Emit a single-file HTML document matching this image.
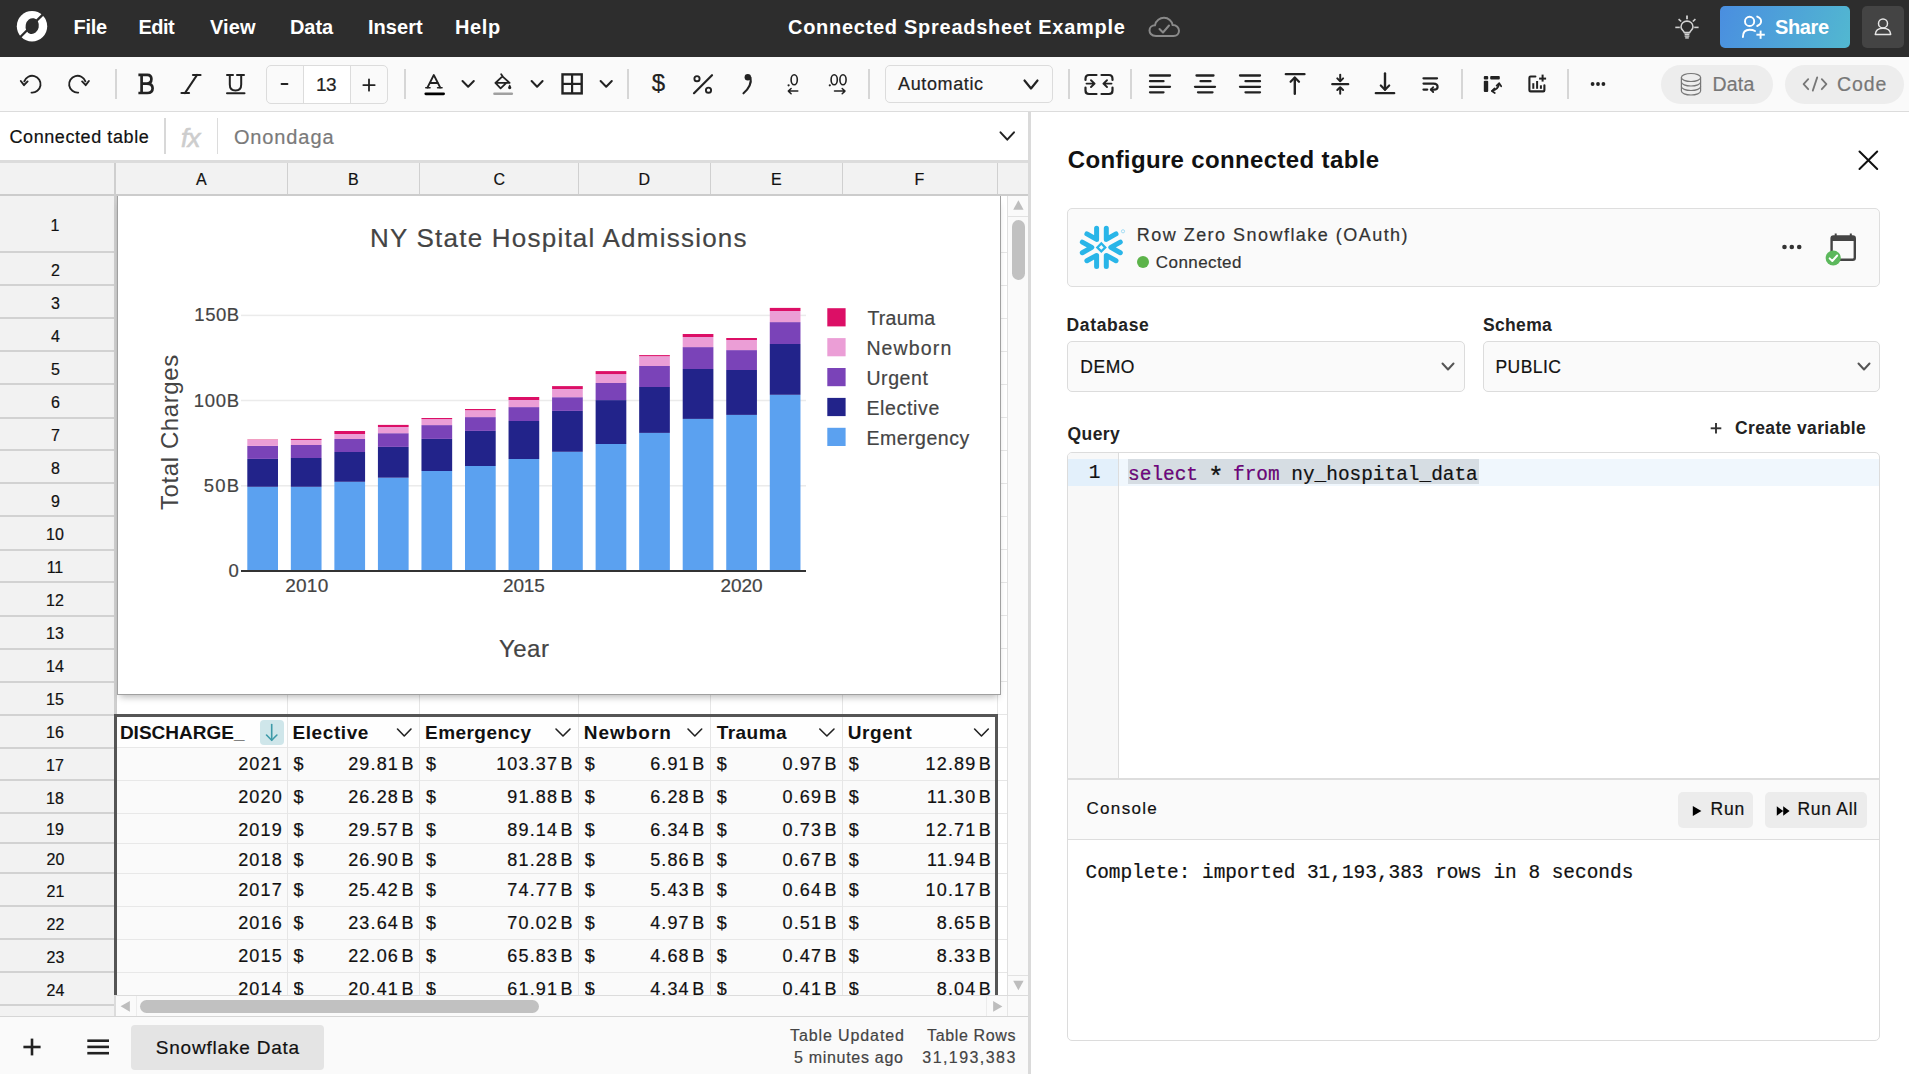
<!DOCTYPE html>
<html><head><meta charset="utf-8"><style>
html,body{margin:0;padding:0;}
body{width:1909px;height:1074px;position:relative;overflow:hidden;background:#fff;font-family:'Liberation Sans',sans-serif;}
svg{position:absolute;left:0;top:0;}
</style></head><body>
<div style="position:absolute;left:0px;top:0px;width:1909px;height:57px;background:#2d2d2d"></div><div style="position:absolute;left:1720px;top:6px;width:130px;height:42px;background:linear-gradient(110deg,#4a8ee0,#52b8d0);border-radius:5px"></div><div style="position:absolute;left:1862px;top:6px;width:42px;height:42px;background:#444;border-radius:5px"></div><div style="position:absolute;left:0px;top:57px;width:1031px;height:54px;background:#fafafa"></div><div style="position:absolute;left:1031px;top:57px;width:878px;height:54px;background:#fafafa"></div><div style="position:absolute;left:0px;top:111px;width:1909px;height:1px;background:#dcdcdc"></div><div style="position:absolute;left:266px;top:65px;width:122px;height:39px;background:#fafafa;border:1px solid #dcdcdc;border-radius:5px;box-sizing:border-box"></div><div style="position:absolute;left:303px;top:66px;width:48px;height:37px;background:#fff;border-left:1px solid #dcdcdc;border-right:1px solid #dcdcdc;box-sizing:border-box"></div><div style="position:absolute;left:885px;top:65px;width:168px;height:38px;background:#fafafa;border:1px solid #dcdcdc;border-radius:5px;box-sizing:border-box"></div><div style="position:absolute;left:1661px;top:65px;width:112px;height:39px;background:#ededed;border-radius:20px"></div><div style="position:absolute;left:1785px;top:65px;width:119px;height:39px;background:#ededed;border-radius:20px"></div><div style="position:absolute;left:115px;top:69px;width:1.5px;height:30px;background:#d6d6d6"></div><div style="position:absolute;left:404px;top:69px;width:1.5px;height:30px;background:#d6d6d6"></div><div style="position:absolute;left:627px;top:69px;width:1.5px;height:30px;background:#d6d6d6"></div><div style="position:absolute;left:868px;top:69px;width:1.5px;height:30px;background:#d6d6d6"></div><div style="position:absolute;left:1068px;top:69px;width:1.5px;height:30px;background:#d6d6d6"></div><div style="position:absolute;left:1130px;top:69px;width:1.5px;height:30px;background:#d6d6d6"></div><div style="position:absolute;left:1461px;top:69px;width:1.5px;height:30px;background:#d6d6d6"></div><div style="position:absolute;left:1567.3px;top:69px;width:1.5px;height:30px;background:#d6d6d6"></div><div style="position:absolute;left:0px;top:112px;width:1028px;height:48px;background:#fff"></div><div style="position:absolute;left:0px;top:160px;width:1028px;height:3px;background:#dcdcdc"></div><div style="position:absolute;left:164px;top:118px;width:2px;height:36px;background:#d8d8d8"></div><div style="position:absolute;left:217px;top:118px;width:1px;height:36px;background:#dcdcdc"></div><div style="position:absolute;left:0px;top:163px;width:1028px;height:31px;background:#f2f2f2"></div><div style="position:absolute;left:0px;top:194px;width:1028px;height:2px;background:#cccccc"></div><div style="position:absolute;left:116px;top:196px;width:892px;height:799px;background:#fff"></div><div style="position:absolute;left:0px;top:196px;width:114px;height:820px;background:#f2f2f2"></div><div style="position:absolute;left:114px;top:163px;width:2px;height:853px;background:#cfcfcf"></div><div style="position:absolute;left:116px;top:196px;width:1px;height:799px;background:#cdcdcd"></div><div style="position:absolute;left:287px;top:163px;width:1px;height:31px;background:#d0d0d0"></div><div style="position:absolute;left:419px;top:163px;width:1px;height:31px;background:#d0d0d0"></div><div style="position:absolute;left:578px;top:163px;width:1px;height:31px;background:#d0d0d0"></div><div style="position:absolute;left:710px;top:163px;width:1px;height:31px;background:#d0d0d0"></div><div style="position:absolute;left:842px;top:163px;width:1px;height:31px;background:#d0d0d0"></div><div style="position:absolute;left:997px;top:163px;width:1px;height:31px;background:#d0d0d0"></div><div style="position:absolute;left:0px;top:250.8px;width:114px;height:2.0px;background:#d2d2d2"></div><div style="position:absolute;left:117px;top:252px;width:891px;height:1px;background:#e6e6e6"></div><div style="position:absolute;left:0px;top:284.2px;width:114px;height:2.0px;background:#d2d2d2"></div><div style="position:absolute;left:117px;top:285px;width:891px;height:1px;background:#e6e6e6"></div><div style="position:absolute;left:0px;top:317.3px;width:114px;height:2.0px;background:#d2d2d2"></div><div style="position:absolute;left:117px;top:318px;width:891px;height:1px;background:#e6e6e6"></div><div style="position:absolute;left:0px;top:350.2px;width:114px;height:2.0px;background:#d2d2d2"></div><div style="position:absolute;left:117px;top:351px;width:891px;height:1px;background:#e6e6e6"></div><div style="position:absolute;left:0px;top:383.2px;width:114px;height:2.0px;background:#d2d2d2"></div><div style="position:absolute;left:117px;top:384px;width:891px;height:1px;background:#e6e6e6"></div><div style="position:absolute;left:0px;top:416.6px;width:114px;height:2.0px;background:#d2d2d2"></div><div style="position:absolute;left:117px;top:417px;width:891px;height:1px;background:#e6e6e6"></div><div style="position:absolute;left:0px;top:449.2px;width:114px;height:2.0px;background:#d2d2d2"></div><div style="position:absolute;left:117px;top:450px;width:891px;height:1px;background:#e6e6e6"></div><div style="position:absolute;left:0px;top:482.2px;width:114px;height:2.0px;background:#d2d2d2"></div><div style="position:absolute;left:117px;top:483px;width:891px;height:1px;background:#e6e6e6"></div><div style="position:absolute;left:0px;top:515.4px;width:114px;height:2.0px;background:#d2d2d2"></div><div style="position:absolute;left:117px;top:516px;width:891px;height:1px;background:#e6e6e6"></div><div style="position:absolute;left:0px;top:548.5px;width:114px;height:2.0px;background:#d2d2d2"></div><div style="position:absolute;left:117px;top:549px;width:891px;height:1px;background:#e6e6e6"></div><div style="position:absolute;left:0px;top:581.4px;width:114px;height:2.0px;background:#d2d2d2"></div><div style="position:absolute;left:117px;top:582px;width:891px;height:1px;background:#e6e6e6"></div><div style="position:absolute;left:0px;top:614.7px;width:114px;height:2.0px;background:#d2d2d2"></div><div style="position:absolute;left:117px;top:615px;width:891px;height:1px;background:#e6e6e6"></div><div style="position:absolute;left:0px;top:647.6px;width:114px;height:2.0px;background:#d2d2d2"></div><div style="position:absolute;left:117px;top:648px;width:891px;height:1px;background:#e6e6e6"></div><div style="position:absolute;left:0px;top:680.8px;width:114px;height:2.0px;background:#d2d2d2"></div><div style="position:absolute;left:117px;top:681px;width:891px;height:1px;background:#e6e6e6"></div><div style="position:absolute;left:0px;top:713.7px;width:114px;height:2.0px;background:#d2d2d2"></div><div style="position:absolute;left:117px;top:714px;width:891px;height:1px;background:#e6e6e6"></div><div style="position:absolute;left:0px;top:746.7px;width:114px;height:2.0px;background:#d2d2d2"></div><div style="position:absolute;left:117px;top:747px;width:891px;height:1px;background:#e6e6e6"></div><div style="position:absolute;left:0px;top:778.8px;width:114px;height:2.0px;background:#d2d2d2"></div><div style="position:absolute;left:117px;top:780px;width:891px;height:1px;background:#e6e6e6"></div><div style="position:absolute;left:0px;top:811.8px;width:114px;height:2.0px;background:#d2d2d2"></div><div style="position:absolute;left:117px;top:813px;width:891px;height:1px;background:#e6e6e6"></div><div style="position:absolute;left:0px;top:841.7px;width:114px;height:2.0px;background:#d2d2d2"></div><div style="position:absolute;left:117px;top:843px;width:891px;height:1px;background:#e6e6e6"></div><div style="position:absolute;left:0px;top:871.9px;width:114px;height:2.0px;background:#d2d2d2"></div><div style="position:absolute;left:117px;top:873px;width:891px;height:1px;background:#e6e6e6"></div><div style="position:absolute;left:0px;top:904.9px;width:114px;height:2.0px;background:#d2d2d2"></div><div style="position:absolute;left:117px;top:906px;width:891px;height:1px;background:#e6e6e6"></div><div style="position:absolute;left:0px;top:937.9px;width:114px;height:2.0px;background:#d2d2d2"></div><div style="position:absolute;left:117px;top:939px;width:891px;height:1px;background:#e6e6e6"></div><div style="position:absolute;left:0px;top:970.9px;width:114px;height:2.0px;background:#d2d2d2"></div><div style="position:absolute;left:117px;top:972px;width:891px;height:1px;background:#e6e6e6"></div><div style="position:absolute;left:0px;top:1003.9px;width:114px;height:2.0px;background:#d2d2d2"></div><div style="position:absolute;left:287px;top:196px;width:1px;height:799px;background:#e6e6e6"></div><div style="position:absolute;left:419px;top:196px;width:1px;height:799px;background:#e6e6e6"></div><div style="position:absolute;left:578px;top:196px;width:1px;height:799px;background:#e6e6e6"></div><div style="position:absolute;left:710px;top:196px;width:1px;height:799px;background:#e6e6e6"></div><div style="position:absolute;left:842px;top:196px;width:1px;height:799px;background:#e6e6e6"></div><div style="position:absolute;left:997px;top:196px;width:1px;height:799px;background:#e6e6e6"></div><div style="position:absolute;left:1007px;top:196px;width:1px;height:799px;background:#e0e0e0"></div><div style="position:absolute;left:114px;top:714px;width:884px;height:281px;background:#fafafa;border:3px solid #555;border-bottom:none;box-sizing:border-box"></div><div style="position:absolute;left:117px;top:717px;width:878px;height:30px;background:#fefefe"></div><div style="position:absolute;left:117px;top:747px;width:878px;height:1px;background:#e8e8e8"></div><div style="position:absolute;left:117px;top:780px;width:878px;height:1px;background:#e8e8e8"></div><div style="position:absolute;left:117px;top:813px;width:878px;height:1px;background:#e8e8e8"></div><div style="position:absolute;left:117px;top:843px;width:878px;height:1px;background:#e8e8e8"></div><div style="position:absolute;left:117px;top:873px;width:878px;height:1px;background:#e8e8e8"></div><div style="position:absolute;left:117px;top:906px;width:878px;height:1px;background:#e8e8e8"></div><div style="position:absolute;left:117px;top:939px;width:878px;height:1px;background:#e8e8e8"></div><div style="position:absolute;left:117px;top:972px;width:878px;height:1px;background:#e8e8e8"></div><div style="position:absolute;left:287px;top:717px;width:1px;height:278px;background:#e6e6e6"></div><div style="position:absolute;left:419px;top:717px;width:1px;height:278px;background:#e6e6e6"></div><div style="position:absolute;left:578px;top:717px;width:1px;height:278px;background:#e6e6e6"></div><div style="position:absolute;left:710px;top:717px;width:1px;height:278px;background:#e6e6e6"></div><div style="position:absolute;left:842px;top:717px;width:1px;height:278px;background:#e6e6e6"></div><div style="position:absolute;left:260px;top:720px;width:24px;height:24.5px;background:#cfe6ea;border-radius:4px"></div><div style="position:absolute;left:1008px;top:196px;width:20px;height:799px;background:#fafafa"></div><div style="position:absolute;left:1008px;top:216px;width:20px;height:1px;background:#e2e2e2"></div><div style="position:absolute;left:1011.5px;top:220px;width:13.5px;height:60px;background:#c1c1c1;border-radius:7px"></div><div style="position:absolute;left:1008px;top:975px;width:20px;height:1px;background:#e2e2e2"></div><div style="position:absolute;left:116px;top:995px;width:891px;height:21px;background:#fafafa"></div><div style="position:absolute;left:116px;top:995px;width:912px;height:1px;background:#dcdcdc"></div><div style="position:absolute;left:136px;top:996px;width:1px;height:20px;background:#ececec"></div><div style="position:absolute;left:140px;top:999.5px;width:399px;height:13.5px;background:#c1c1c1;border-radius:7px"></div><div style="position:absolute;left:986px;top:996px;width:1px;height:20px;background:#ececec"></div><div style="position:absolute;left:1007px;top:996px;width:1px;height:20px;background:#e6e6e6"></div><div style="position:absolute;left:1008px;top:996px;width:20px;height:20px;background:#fafafa"></div><div style="position:absolute;left:114px;top:995px;width:2px;height:21px;background:#dcdcdc"></div><div style="position:absolute;left:0px;top:1016px;width:1028px;height:58px;background:#fafafa"></div><div style="position:absolute;left:0px;top:1016px;width:1028px;height:1px;background:#d6d6d6"></div><div style="position:absolute;left:131px;top:1025px;width:193px;height:45px;background:#e4e4e4;border-radius:4px"></div><div style="position:absolute;left:1028px;top:112px;width:3px;height:962px;background:#dadada"></div><div style="position:absolute;left:1031px;top:112px;width:878px;height:962px;background:#fff"></div><div style="position:absolute;left:1067px;top:208px;width:813px;height:79px;background:#fafafa;border:1px solid #dedede;border-radius:5px;box-sizing:border-box"></div><div style="position:absolute;left:1137px;top:256px;width:12px;height:12px;background:#5cb34a;border-radius:6px"></div><div style="position:absolute;left:1067px;top:341px;width:398px;height:51px;background:#fafafa;border:1px solid #dcdcdc;border-radius:5px;box-sizing:border-box"></div><div style="position:absolute;left:1483px;top:341px;width:397px;height:51px;background:#fafafa;border:1px solid #dcdcdc;border-radius:5px;box-sizing:border-box"></div><div style="position:absolute;left:1067px;top:452px;width:813px;height:589px;background:#fff;border:1px solid #dcdcdc;border-radius:5px;box-sizing:border-box"></div><div style="position:absolute;left:1068px;top:453px;width:50px;height:326px;background:#f8f8f8;border-top-left-radius:4px"></div><div style="position:absolute;left:1118px;top:453px;width:1px;height:326px;background:#dddddd"></div><div style="position:absolute;left:1068px;top:459px;width:50px;height:27px;background:#e3f0fb"></div><div style="position:absolute;left:1119px;top:459px;width:760px;height:27px;background:#f0f7fd"></div><div style="position:absolute;left:1128px;top:459px;width:351px;height:25px;background:#d6dde3"></div><div style="position:absolute;left:1068px;top:779px;width:811px;height:60px;background:#fafafa"></div><div style="position:absolute;left:1068px;top:778px;width:811px;height:2px;background:#dddddd"></div><div style="position:absolute;left:1068px;top:839px;width:811px;height:1px;background:#dddddd"></div><div style="position:absolute;left:1678px;top:792px;width:75px;height:35.5px;background:#ececec;border-radius:5px"></div><div style="position:absolute;left:1765px;top:792px;width:102px;height:35.5px;background:#ececec;border-radius:5px"></div><div style="position:absolute;left:117px;top:196px;width:882px;height:498px;background:#fff;border:1px solid #a0a0a0;border-top:none;box-shadow:0 5px 7px -3px rgba(0,0,0,0.28)"></div>
<div style="position:absolute;left:73.50px;top:16.77px;font-family:'Liberation Sans';font-size:20px;line-height:20px;font-weight:700;font-style:normal;color:#fff;letter-spacing:-0.277px;white-space:pre;">File</div><div style="position:absolute;left:138.50px;top:16.77px;font-family:'Liberation Sans';font-size:20px;line-height:20px;font-weight:700;font-style:normal;color:#fff;letter-spacing:-0.538px;white-space:pre;">Edit</div><div style="position:absolute;left:210.00px;top:16.77px;font-family:'Liberation Sans';font-size:20px;line-height:20px;font-weight:700;font-style:normal;color:#fff;letter-spacing:0.114px;white-space:pre;">View</div><div style="position:absolute;left:290.00px;top:16.77px;font-family:'Liberation Sans';font-size:20px;line-height:20px;font-weight:700;font-style:normal;color:#fff;letter-spacing:-0.076px;white-space:pre;">Data</div><div style="position:absolute;left:368.00px;top:16.77px;font-family:'Liberation Sans';font-size:20px;line-height:20px;font-weight:700;font-style:normal;color:#fff;letter-spacing:0.039px;white-space:pre;">Insert</div><div style="position:absolute;left:455.00px;top:16.77px;font-family:'Liberation Sans';font-size:20px;line-height:20px;font-weight:700;font-style:normal;color:#fff;letter-spacing:0.626px;white-space:pre;">Help</div><div style="position:absolute;left:788.00px;top:17.27px;font-family:'Liberation Sans';font-size:20px;line-height:20px;font-weight:700;font-style:normal;color:#fff;letter-spacing:0.716px;white-space:pre;">Connected Spreadsheet Example</div><div style="position:absolute;left:1775.00px;top:17.07px;font-family:'Liberation Sans';font-size:20px;line-height:20px;font-weight:700;font-style:normal;color:#fff;letter-spacing:-0.366px;white-space:pre;">Share</div><div style="position:absolute;left:316.00px;top:74.52px;font-family:'Liberation Sans';font-size:19px;line-height:19px;font-weight:400;font-style:normal;color:#222;letter-spacing:-0.567px;white-space:pre;-webkit-text-stroke:0.2px #222;">13</div><div style="position:absolute;left:898.00px;top:74.76px;font-family:'Liberation Sans';font-size:18px;line-height:18px;font-weight:400;font-style:normal;color:#222;letter-spacing:0.621px;white-space:pre;-webkit-text-stroke:0.2px #222;">Automatic</div><div style="position:absolute;left:1712.50px;top:75.39px;font-family:'Liberation Sans';font-size:19.5px;line-height:19.5px;font-weight:400;font-style:normal;color:#777;letter-spacing:0.218px;white-space:pre;-webkit-text-stroke:0.2px #777;">Data</div><div style="position:absolute;left:1837.00px;top:75.39px;font-family:'Liberation Sans';font-size:19.5px;line-height:19.5px;font-weight:400;font-style:normal;color:#777;letter-spacing:0.876px;white-space:pre;-webkit-text-stroke:0.2px #777;">Code</div><div style="position:absolute;left:9.50px;top:127.76px;font-family:'Liberation Sans';font-size:18px;line-height:18px;font-weight:400;font-style:normal;color:#111;letter-spacing:0.580px;white-space:pre;-webkit-text-stroke:0.2px #111;">Connected table</div><div style="position:absolute;left:181.00px;top:124.99px;font-family:'Liberation Sans';font-size:26px;line-height:26px;font-weight:400;font-style:italic;color:#cdcdcd;letter-spacing:-0.600px;white-space:pre;-webkit-text-stroke:0.6px #cdcdcd;">fx</div><div style="position:absolute;left:233.90px;top:126.87px;font-family:'Liberation Sans';font-size:20px;line-height:20px;font-weight:400;font-style:normal;color:#7a7a7a;letter-spacing:0.886px;white-space:pre;-webkit-text-stroke:0.2px #7a7a7a;">Onondaga</div><div style="position:absolute;left:196.00px;top:172.46px;font-family:'Liberation Sans';font-size:16px;line-height:16px;font-weight:400;font-style:normal;color:#111;letter-spacing:0.000px;white-space:pre;-webkit-text-stroke:0.2px #111;">A</div><div style="position:absolute;left:348.00px;top:172.46px;font-family:'Liberation Sans';font-size:16px;line-height:16px;font-weight:400;font-style:normal;color:#111;letter-spacing:0.000px;white-space:pre;-webkit-text-stroke:0.2px #111;">B</div><div style="position:absolute;left:493.50px;top:172.46px;font-family:'Liberation Sans';font-size:16px;line-height:16px;font-weight:400;font-style:normal;color:#111;letter-spacing:0.000px;white-space:pre;-webkit-text-stroke:0.2px #111;">C</div><div style="position:absolute;left:638.50px;top:172.46px;font-family:'Liberation Sans';font-size:16px;line-height:16px;font-weight:400;font-style:normal;color:#111;letter-spacing:0.000px;white-space:pre;-webkit-text-stroke:0.2px #111;">D</div><div style="position:absolute;left:771.00px;top:172.46px;font-family:'Liberation Sans';font-size:16px;line-height:16px;font-weight:400;font-style:normal;color:#111;letter-spacing:0.000px;white-space:pre;-webkit-text-stroke:0.2px #111;">E</div><div style="position:absolute;left:914.50px;top:172.46px;font-family:'Liberation Sans';font-size:16px;line-height:16px;font-weight:400;font-style:normal;color:#111;letter-spacing:0.000px;white-space:pre;-webkit-text-stroke:0.2px #111;">F</div><div style="position:absolute;left:50.50px;top:218.46px;font-family:'Liberation Sans';font-size:16px;line-height:16px;font-weight:400;font-style:normal;color:#111;letter-spacing:0.000px;white-space:pre;-webkit-text-stroke:0.2px #111;">1</div><div style="position:absolute;left:51.00px;top:262.96px;font-family:'Liberation Sans';font-size:16px;line-height:16px;font-weight:400;font-style:normal;color:#111;letter-spacing:0.000px;white-space:pre;-webkit-text-stroke:0.2px #111;">2</div><div style="position:absolute;left:51.00px;top:295.96px;font-family:'Liberation Sans';font-size:16px;line-height:16px;font-weight:400;font-style:normal;color:#111;letter-spacing:0.000px;white-space:pre;-webkit-text-stroke:0.2px #111;">3</div><div style="position:absolute;left:51.00px;top:328.96px;font-family:'Liberation Sans';font-size:16px;line-height:16px;font-weight:400;font-style:normal;color:#111;letter-spacing:0.000px;white-space:pre;-webkit-text-stroke:0.2px #111;">4</div><div style="position:absolute;left:51.00px;top:361.96px;font-family:'Liberation Sans';font-size:16px;line-height:16px;font-weight:400;font-style:normal;color:#111;letter-spacing:0.000px;white-space:pre;-webkit-text-stroke:0.2px #111;">5</div><div style="position:absolute;left:51.00px;top:394.96px;font-family:'Liberation Sans';font-size:16px;line-height:16px;font-weight:400;font-style:normal;color:#111;letter-spacing:0.000px;white-space:pre;-webkit-text-stroke:0.2px #111;">6</div><div style="position:absolute;left:51.00px;top:427.96px;font-family:'Liberation Sans';font-size:16px;line-height:16px;font-weight:400;font-style:normal;color:#111;letter-spacing:0.000px;white-space:pre;-webkit-text-stroke:0.2px #111;">7</div><div style="position:absolute;left:51.00px;top:460.96px;font-family:'Liberation Sans';font-size:16px;line-height:16px;font-weight:400;font-style:normal;color:#111;letter-spacing:0.000px;white-space:pre;-webkit-text-stroke:0.2px #111;">8</div><div style="position:absolute;left:51.00px;top:493.96px;font-family:'Liberation Sans';font-size:16px;line-height:16px;font-weight:400;font-style:normal;color:#111;letter-spacing:0.000px;white-space:pre;-webkit-text-stroke:0.2px #111;">9</div><div style="position:absolute;left:46.05px;top:526.96px;font-family:'Liberation Sans';font-size:16px;line-height:16px;font-weight:400;font-style:normal;color:#111;letter-spacing:0.000px;white-space:pre;-webkit-text-stroke:0.2px #111;">10</div><div style="position:absolute;left:46.64px;top:559.96px;font-family:'Liberation Sans';font-size:16px;line-height:16px;font-weight:400;font-style:normal;color:#111;letter-spacing:0.000px;white-space:pre;-webkit-text-stroke:0.2px #111;">11</div><div style="position:absolute;left:46.05px;top:592.96px;font-family:'Liberation Sans';font-size:16px;line-height:16px;font-weight:400;font-style:normal;color:#111;letter-spacing:0.000px;white-space:pre;-webkit-text-stroke:0.2px #111;">12</div><div style="position:absolute;left:46.05px;top:625.96px;font-family:'Liberation Sans';font-size:16px;line-height:16px;font-weight:400;font-style:normal;color:#111;letter-spacing:0.000px;white-space:pre;-webkit-text-stroke:0.2px #111;">13</div><div style="position:absolute;left:46.05px;top:658.96px;font-family:'Liberation Sans';font-size:16px;line-height:16px;font-weight:400;font-style:normal;color:#111;letter-spacing:0.000px;white-space:pre;-webkit-text-stroke:0.2px #111;">14</div><div style="position:absolute;left:46.05px;top:691.96px;font-family:'Liberation Sans';font-size:16px;line-height:16px;font-weight:400;font-style:normal;color:#111;letter-spacing:0.000px;white-space:pre;-webkit-text-stroke:0.2px #111;">15</div><div style="position:absolute;left:46.05px;top:724.96px;font-family:'Liberation Sans';font-size:16px;line-height:16px;font-weight:400;font-style:normal;color:#111;letter-spacing:0.000px;white-space:pre;-webkit-text-stroke:0.2px #111;">16</div><div style="position:absolute;left:46.05px;top:757.96px;font-family:'Liberation Sans';font-size:16px;line-height:16px;font-weight:400;font-style:normal;color:#111;letter-spacing:0.000px;white-space:pre;-webkit-text-stroke:0.2px #111;">17</div><div style="position:absolute;left:46.05px;top:790.96px;font-family:'Liberation Sans';font-size:16px;line-height:16px;font-weight:400;font-style:normal;color:#111;letter-spacing:0.000px;white-space:pre;-webkit-text-stroke:0.2px #111;">18</div><div style="position:absolute;left:46.05px;top:822.46px;font-family:'Liberation Sans';font-size:16px;line-height:16px;font-weight:400;font-style:normal;color:#111;letter-spacing:0.000px;white-space:pre;-webkit-text-stroke:0.2px #111;">19</div><div style="position:absolute;left:46.55px;top:852.46px;font-family:'Liberation Sans';font-size:16px;line-height:16px;font-weight:400;font-style:normal;color:#111;letter-spacing:0.000px;white-space:pre;-webkit-text-stroke:0.2px #111;">20</div><div style="position:absolute;left:46.55px;top:883.96px;font-family:'Liberation Sans';font-size:16px;line-height:16px;font-weight:400;font-style:normal;color:#111;letter-spacing:0.000px;white-space:pre;-webkit-text-stroke:0.2px #111;">21</div><div style="position:absolute;left:46.55px;top:916.96px;font-family:'Liberation Sans';font-size:16px;line-height:16px;font-weight:400;font-style:normal;color:#111;letter-spacing:0.000px;white-space:pre;-webkit-text-stroke:0.2px #111;">22</div><div style="position:absolute;left:46.55px;top:949.96px;font-family:'Liberation Sans';font-size:16px;line-height:16px;font-weight:400;font-style:normal;color:#111;letter-spacing:0.000px;white-space:pre;-webkit-text-stroke:0.2px #111;">23</div><div style="position:absolute;left:46.55px;top:982.96px;font-family:'Liberation Sans';font-size:16px;line-height:16px;font-weight:400;font-style:normal;color:#111;letter-spacing:0.000px;white-space:pre;-webkit-text-stroke:0.2px #111;">24</div><div style="position:absolute;left:119.90px;top:722.72px;font-family:'Liberation Sans';font-size:19px;line-height:19px;font-weight:700;font-style:normal;color:#111;letter-spacing:0.010px;white-space:pre;">DISCHARGE_</div><div style="position:absolute;left:292.50px;top:722.72px;font-family:'Liberation Sans';font-size:19px;line-height:19px;font-weight:700;font-style:normal;color:#111;letter-spacing:0.577px;white-space:pre;">Elective</div><div style="position:absolute;left:425.00px;top:722.72px;font-family:'Liberation Sans';font-size:19px;line-height:19px;font-weight:700;font-style:normal;color:#111;letter-spacing:0.453px;white-space:pre;">Emergency</div><div style="position:absolute;left:583.80px;top:722.72px;font-family:'Liberation Sans';font-size:19px;line-height:19px;font-weight:700;font-style:normal;color:#111;letter-spacing:0.971px;white-space:pre;">Newborn</div><div style="position:absolute;left:716.80px;top:722.72px;font-family:'Liberation Sans';font-size:19px;line-height:19px;font-weight:700;font-style:normal;color:#111;letter-spacing:0.436px;white-space:pre;">Trauma</div><div style="position:absolute;left:847.80px;top:722.72px;font-family:'Liberation Sans';font-size:19px;line-height:19px;font-weight:700;font-style:normal;color:#111;letter-spacing:0.561px;white-space:pre;">Urgent</div><div style="position:absolute;left:238.17px;top:755.16px;font-family:'Liberation Sans';font-size:18px;line-height:18px;font-weight:400;font-style:normal;color:#111;letter-spacing:1.200px;white-space:pre;-webkit-text-stroke:0.2px #111;">2021</div><div style="position:absolute;left:293.50px;top:755.16px;font-family:'Liberation Sans';font-size:18px;line-height:18px;font-weight:400;font-style:normal;color:#111;letter-spacing:0.000px;white-space:pre;-webkit-text-stroke:0.2px #111;">$</div><div style="position:absolute;left:401.40px;top:755.16px;font-family:'Liberation Sans';font-size:18px;line-height:18px;font-weight:400;font-style:normal;color:#111;letter-spacing:0.000px;white-space:pre;-webkit-text-stroke:0.2px #111;">B</div><div style="position:absolute;left:348.17px;top:755.16px;font-family:'Liberation Sans';font-size:18px;line-height:18px;font-weight:400;font-style:normal;color:#111;letter-spacing:1.150px;white-space:pre;-webkit-text-stroke:0.2px #111;">29.81</div><div style="position:absolute;left:426.00px;top:755.16px;font-family:'Liberation Sans';font-size:18px;line-height:18px;font-weight:400;font-style:normal;color:#111;letter-spacing:0.000px;white-space:pre;-webkit-text-stroke:0.2px #111;">$</div><div style="position:absolute;left:560.60px;top:755.16px;font-family:'Liberation Sans';font-size:18px;line-height:18px;font-weight:400;font-style:normal;color:#111;letter-spacing:0.000px;white-space:pre;-webkit-text-stroke:0.2px #111;">B</div><div style="position:absolute;left:496.21px;top:755.16px;font-family:'Liberation Sans';font-size:18px;line-height:18px;font-weight:400;font-style:normal;color:#111;letter-spacing:1.150px;white-space:pre;-webkit-text-stroke:0.2px #111;">103.37</div><div style="position:absolute;left:584.80px;top:755.16px;font-family:'Liberation Sans';font-size:18px;line-height:18px;font-weight:400;font-style:normal;color:#111;letter-spacing:0.000px;white-space:pre;-webkit-text-stroke:0.2px #111;">$</div><div style="position:absolute;left:692.20px;top:755.16px;font-family:'Liberation Sans';font-size:18px;line-height:18px;font-weight:400;font-style:normal;color:#111;letter-spacing:0.000px;white-space:pre;-webkit-text-stroke:0.2px #111;">B</div><div style="position:absolute;left:650.13px;top:755.16px;font-family:'Liberation Sans';font-size:18px;line-height:18px;font-weight:400;font-style:normal;color:#111;letter-spacing:1.150px;white-space:pre;-webkit-text-stroke:0.2px #111;">6.91</div><div style="position:absolute;left:716.80px;top:755.16px;font-family:'Liberation Sans';font-size:18px;line-height:18px;font-weight:400;font-style:normal;color:#111;letter-spacing:0.000px;white-space:pre;-webkit-text-stroke:0.2px #111;">$</div><div style="position:absolute;left:824.60px;top:755.16px;font-family:'Liberation Sans';font-size:18px;line-height:18px;font-weight:400;font-style:normal;color:#111;letter-spacing:0.000px;white-space:pre;-webkit-text-stroke:0.2px #111;">B</div><div style="position:absolute;left:782.53px;top:755.16px;font-family:'Liberation Sans';font-size:18px;line-height:18px;font-weight:400;font-style:normal;color:#111;letter-spacing:1.150px;white-space:pre;-webkit-text-stroke:0.2px #111;">0.97</div><div style="position:absolute;left:848.80px;top:755.16px;font-family:'Liberation Sans';font-size:18px;line-height:18px;font-weight:400;font-style:normal;color:#111;letter-spacing:0.000px;white-space:pre;-webkit-text-stroke:0.2px #111;">$</div><div style="position:absolute;left:978.80px;top:755.16px;font-family:'Liberation Sans';font-size:18px;line-height:18px;font-weight:400;font-style:normal;color:#111;letter-spacing:0.000px;white-space:pre;-webkit-text-stroke:0.2px #111;">B</div><div style="position:absolute;left:925.57px;top:755.16px;font-family:'Liberation Sans';font-size:18px;line-height:18px;font-weight:400;font-style:normal;color:#111;letter-spacing:1.150px;white-space:pre;-webkit-text-stroke:0.2px #111;">12.89</div><div style="position:absolute;left:238.17px;top:788.16px;font-family:'Liberation Sans';font-size:18px;line-height:18px;font-weight:400;font-style:normal;color:#111;letter-spacing:1.200px;white-space:pre;-webkit-text-stroke:0.2px #111;">2020</div><div style="position:absolute;left:293.50px;top:788.16px;font-family:'Liberation Sans';font-size:18px;line-height:18px;font-weight:400;font-style:normal;color:#111;letter-spacing:0.000px;white-space:pre;-webkit-text-stroke:0.2px #111;">$</div><div style="position:absolute;left:401.40px;top:788.16px;font-family:'Liberation Sans';font-size:18px;line-height:18px;font-weight:400;font-style:normal;color:#111;letter-spacing:0.000px;white-space:pre;-webkit-text-stroke:0.2px #111;">B</div><div style="position:absolute;left:348.17px;top:788.16px;font-family:'Liberation Sans';font-size:18px;line-height:18px;font-weight:400;font-style:normal;color:#111;letter-spacing:1.150px;white-space:pre;-webkit-text-stroke:0.2px #111;">26.28</div><div style="position:absolute;left:426.00px;top:788.16px;font-family:'Liberation Sans';font-size:18px;line-height:18px;font-weight:400;font-style:normal;color:#111;letter-spacing:0.000px;white-space:pre;-webkit-text-stroke:0.2px #111;">$</div><div style="position:absolute;left:560.60px;top:788.16px;font-family:'Liberation Sans';font-size:18px;line-height:18px;font-weight:400;font-style:normal;color:#111;letter-spacing:0.000px;white-space:pre;-webkit-text-stroke:0.2px #111;">B</div><div style="position:absolute;left:507.37px;top:788.16px;font-family:'Liberation Sans';font-size:18px;line-height:18px;font-weight:400;font-style:normal;color:#111;letter-spacing:1.150px;white-space:pre;-webkit-text-stroke:0.2px #111;">91.88</div><div style="position:absolute;left:584.80px;top:788.16px;font-family:'Liberation Sans';font-size:18px;line-height:18px;font-weight:400;font-style:normal;color:#111;letter-spacing:0.000px;white-space:pre;-webkit-text-stroke:0.2px #111;">$</div><div style="position:absolute;left:692.20px;top:788.16px;font-family:'Liberation Sans';font-size:18px;line-height:18px;font-weight:400;font-style:normal;color:#111;letter-spacing:0.000px;white-space:pre;-webkit-text-stroke:0.2px #111;">B</div><div style="position:absolute;left:650.13px;top:788.16px;font-family:'Liberation Sans';font-size:18px;line-height:18px;font-weight:400;font-style:normal;color:#111;letter-spacing:1.150px;white-space:pre;-webkit-text-stroke:0.2px #111;">6.28</div><div style="position:absolute;left:716.80px;top:788.16px;font-family:'Liberation Sans';font-size:18px;line-height:18px;font-weight:400;font-style:normal;color:#111;letter-spacing:0.000px;white-space:pre;-webkit-text-stroke:0.2px #111;">$</div><div style="position:absolute;left:824.60px;top:788.16px;font-family:'Liberation Sans';font-size:18px;line-height:18px;font-weight:400;font-style:normal;color:#111;letter-spacing:0.000px;white-space:pre;-webkit-text-stroke:0.2px #111;">B</div><div style="position:absolute;left:782.53px;top:788.16px;font-family:'Liberation Sans';font-size:18px;line-height:18px;font-weight:400;font-style:normal;color:#111;letter-spacing:1.150px;white-space:pre;-webkit-text-stroke:0.2px #111;">0.69</div><div style="position:absolute;left:848.80px;top:788.16px;font-family:'Liberation Sans';font-size:18px;line-height:18px;font-weight:400;font-style:normal;color:#111;letter-spacing:0.000px;white-space:pre;-webkit-text-stroke:0.2px #111;">$</div><div style="position:absolute;left:978.80px;top:788.16px;font-family:'Liberation Sans';font-size:18px;line-height:18px;font-weight:400;font-style:normal;color:#111;letter-spacing:0.000px;white-space:pre;-webkit-text-stroke:0.2px #111;">B</div><div style="position:absolute;left:926.90px;top:788.16px;font-family:'Liberation Sans';font-size:18px;line-height:18px;font-weight:400;font-style:normal;color:#111;letter-spacing:1.150px;white-space:pre;-webkit-text-stroke:0.2px #111;">11.30</div><div style="position:absolute;left:238.17px;top:821.16px;font-family:'Liberation Sans';font-size:18px;line-height:18px;font-weight:400;font-style:normal;color:#111;letter-spacing:1.200px;white-space:pre;-webkit-text-stroke:0.2px #111;">2019</div><div style="position:absolute;left:293.50px;top:821.16px;font-family:'Liberation Sans';font-size:18px;line-height:18px;font-weight:400;font-style:normal;color:#111;letter-spacing:0.000px;white-space:pre;-webkit-text-stroke:0.2px #111;">$</div><div style="position:absolute;left:401.40px;top:821.16px;font-family:'Liberation Sans';font-size:18px;line-height:18px;font-weight:400;font-style:normal;color:#111;letter-spacing:0.000px;white-space:pre;-webkit-text-stroke:0.2px #111;">B</div><div style="position:absolute;left:348.17px;top:821.16px;font-family:'Liberation Sans';font-size:18px;line-height:18px;font-weight:400;font-style:normal;color:#111;letter-spacing:1.150px;white-space:pre;-webkit-text-stroke:0.2px #111;">29.57</div><div style="position:absolute;left:426.00px;top:821.16px;font-family:'Liberation Sans';font-size:18px;line-height:18px;font-weight:400;font-style:normal;color:#111;letter-spacing:0.000px;white-space:pre;-webkit-text-stroke:0.2px #111;">$</div><div style="position:absolute;left:560.60px;top:821.16px;font-family:'Liberation Sans';font-size:18px;line-height:18px;font-weight:400;font-style:normal;color:#111;letter-spacing:0.000px;white-space:pre;-webkit-text-stroke:0.2px #111;">B</div><div style="position:absolute;left:507.37px;top:821.16px;font-family:'Liberation Sans';font-size:18px;line-height:18px;font-weight:400;font-style:normal;color:#111;letter-spacing:1.150px;white-space:pre;-webkit-text-stroke:0.2px #111;">89.14</div><div style="position:absolute;left:584.80px;top:821.16px;font-family:'Liberation Sans';font-size:18px;line-height:18px;font-weight:400;font-style:normal;color:#111;letter-spacing:0.000px;white-space:pre;-webkit-text-stroke:0.2px #111;">$</div><div style="position:absolute;left:692.20px;top:821.16px;font-family:'Liberation Sans';font-size:18px;line-height:18px;font-weight:400;font-style:normal;color:#111;letter-spacing:0.000px;white-space:pre;-webkit-text-stroke:0.2px #111;">B</div><div style="position:absolute;left:650.13px;top:821.16px;font-family:'Liberation Sans';font-size:18px;line-height:18px;font-weight:400;font-style:normal;color:#111;letter-spacing:1.150px;white-space:pre;-webkit-text-stroke:0.2px #111;">6.34</div><div style="position:absolute;left:716.80px;top:821.16px;font-family:'Liberation Sans';font-size:18px;line-height:18px;font-weight:400;font-style:normal;color:#111;letter-spacing:0.000px;white-space:pre;-webkit-text-stroke:0.2px #111;">$</div><div style="position:absolute;left:824.60px;top:821.16px;font-family:'Liberation Sans';font-size:18px;line-height:18px;font-weight:400;font-style:normal;color:#111;letter-spacing:0.000px;white-space:pre;-webkit-text-stroke:0.2px #111;">B</div><div style="position:absolute;left:782.53px;top:821.16px;font-family:'Liberation Sans';font-size:18px;line-height:18px;font-weight:400;font-style:normal;color:#111;letter-spacing:1.150px;white-space:pre;-webkit-text-stroke:0.2px #111;">0.73</div><div style="position:absolute;left:848.80px;top:821.16px;font-family:'Liberation Sans';font-size:18px;line-height:18px;font-weight:400;font-style:normal;color:#111;letter-spacing:0.000px;white-space:pre;-webkit-text-stroke:0.2px #111;">$</div><div style="position:absolute;left:978.80px;top:821.16px;font-family:'Liberation Sans';font-size:18px;line-height:18px;font-weight:400;font-style:normal;color:#111;letter-spacing:0.000px;white-space:pre;-webkit-text-stroke:0.2px #111;">B</div><div style="position:absolute;left:925.57px;top:821.16px;font-family:'Liberation Sans';font-size:18px;line-height:18px;font-weight:400;font-style:normal;color:#111;letter-spacing:1.150px;white-space:pre;-webkit-text-stroke:0.2px #111;">12.71</div><div style="position:absolute;left:238.17px;top:851.16px;font-family:'Liberation Sans';font-size:18px;line-height:18px;font-weight:400;font-style:normal;color:#111;letter-spacing:1.200px;white-space:pre;-webkit-text-stroke:0.2px #111;">2018</div><div style="position:absolute;left:293.50px;top:851.16px;font-family:'Liberation Sans';font-size:18px;line-height:18px;font-weight:400;font-style:normal;color:#111;letter-spacing:0.000px;white-space:pre;-webkit-text-stroke:0.2px #111;">$</div><div style="position:absolute;left:401.40px;top:851.16px;font-family:'Liberation Sans';font-size:18px;line-height:18px;font-weight:400;font-style:normal;color:#111;letter-spacing:0.000px;white-space:pre;-webkit-text-stroke:0.2px #111;">B</div><div style="position:absolute;left:348.17px;top:851.16px;font-family:'Liberation Sans';font-size:18px;line-height:18px;font-weight:400;font-style:normal;color:#111;letter-spacing:1.150px;white-space:pre;-webkit-text-stroke:0.2px #111;">26.90</div><div style="position:absolute;left:426.00px;top:851.16px;font-family:'Liberation Sans';font-size:18px;line-height:18px;font-weight:400;font-style:normal;color:#111;letter-spacing:0.000px;white-space:pre;-webkit-text-stroke:0.2px #111;">$</div><div style="position:absolute;left:560.60px;top:851.16px;font-family:'Liberation Sans';font-size:18px;line-height:18px;font-weight:400;font-style:normal;color:#111;letter-spacing:0.000px;white-space:pre;-webkit-text-stroke:0.2px #111;">B</div><div style="position:absolute;left:507.37px;top:851.16px;font-family:'Liberation Sans';font-size:18px;line-height:18px;font-weight:400;font-style:normal;color:#111;letter-spacing:1.150px;white-space:pre;-webkit-text-stroke:0.2px #111;">81.28</div><div style="position:absolute;left:584.80px;top:851.16px;font-family:'Liberation Sans';font-size:18px;line-height:18px;font-weight:400;font-style:normal;color:#111;letter-spacing:0.000px;white-space:pre;-webkit-text-stroke:0.2px #111;">$</div><div style="position:absolute;left:692.20px;top:851.16px;font-family:'Liberation Sans';font-size:18px;line-height:18px;font-weight:400;font-style:normal;color:#111;letter-spacing:0.000px;white-space:pre;-webkit-text-stroke:0.2px #111;">B</div><div style="position:absolute;left:650.13px;top:851.16px;font-family:'Liberation Sans';font-size:18px;line-height:18px;font-weight:400;font-style:normal;color:#111;letter-spacing:1.150px;white-space:pre;-webkit-text-stroke:0.2px #111;">5.86</div><div style="position:absolute;left:716.80px;top:851.16px;font-family:'Liberation Sans';font-size:18px;line-height:18px;font-weight:400;font-style:normal;color:#111;letter-spacing:0.000px;white-space:pre;-webkit-text-stroke:0.2px #111;">$</div><div style="position:absolute;left:824.60px;top:851.16px;font-family:'Liberation Sans';font-size:18px;line-height:18px;font-weight:400;font-style:normal;color:#111;letter-spacing:0.000px;white-space:pre;-webkit-text-stroke:0.2px #111;">B</div><div style="position:absolute;left:782.53px;top:851.16px;font-family:'Liberation Sans';font-size:18px;line-height:18px;font-weight:400;font-style:normal;color:#111;letter-spacing:1.150px;white-space:pre;-webkit-text-stroke:0.2px #111;">0.67</div><div style="position:absolute;left:848.80px;top:851.16px;font-family:'Liberation Sans';font-size:18px;line-height:18px;font-weight:400;font-style:normal;color:#111;letter-spacing:0.000px;white-space:pre;-webkit-text-stroke:0.2px #111;">$</div><div style="position:absolute;left:978.80px;top:851.16px;font-family:'Liberation Sans';font-size:18px;line-height:18px;font-weight:400;font-style:normal;color:#111;letter-spacing:0.000px;white-space:pre;-webkit-text-stroke:0.2px #111;">B</div><div style="position:absolute;left:926.90px;top:851.16px;font-family:'Liberation Sans';font-size:18px;line-height:18px;font-weight:400;font-style:normal;color:#111;letter-spacing:1.150px;white-space:pre;-webkit-text-stroke:0.2px #111;">11.94</div><div style="position:absolute;left:238.17px;top:881.16px;font-family:'Liberation Sans';font-size:18px;line-height:18px;font-weight:400;font-style:normal;color:#111;letter-spacing:1.200px;white-space:pre;-webkit-text-stroke:0.2px #111;">2017</div><div style="position:absolute;left:293.50px;top:881.16px;font-family:'Liberation Sans';font-size:18px;line-height:18px;font-weight:400;font-style:normal;color:#111;letter-spacing:0.000px;white-space:pre;-webkit-text-stroke:0.2px #111;">$</div><div style="position:absolute;left:401.40px;top:881.16px;font-family:'Liberation Sans';font-size:18px;line-height:18px;font-weight:400;font-style:normal;color:#111;letter-spacing:0.000px;white-space:pre;-webkit-text-stroke:0.2px #111;">B</div><div style="position:absolute;left:348.17px;top:881.16px;font-family:'Liberation Sans';font-size:18px;line-height:18px;font-weight:400;font-style:normal;color:#111;letter-spacing:1.150px;white-space:pre;-webkit-text-stroke:0.2px #111;">25.42</div><div style="position:absolute;left:426.00px;top:881.16px;font-family:'Liberation Sans';font-size:18px;line-height:18px;font-weight:400;font-style:normal;color:#111;letter-spacing:0.000px;white-space:pre;-webkit-text-stroke:0.2px #111;">$</div><div style="position:absolute;left:560.60px;top:881.16px;font-family:'Liberation Sans';font-size:18px;line-height:18px;font-weight:400;font-style:normal;color:#111;letter-spacing:0.000px;white-space:pre;-webkit-text-stroke:0.2px #111;">B</div><div style="position:absolute;left:507.37px;top:881.16px;font-family:'Liberation Sans';font-size:18px;line-height:18px;font-weight:400;font-style:normal;color:#111;letter-spacing:1.150px;white-space:pre;-webkit-text-stroke:0.2px #111;">74.77</div><div style="position:absolute;left:584.80px;top:881.16px;font-family:'Liberation Sans';font-size:18px;line-height:18px;font-weight:400;font-style:normal;color:#111;letter-spacing:0.000px;white-space:pre;-webkit-text-stroke:0.2px #111;">$</div><div style="position:absolute;left:692.20px;top:881.16px;font-family:'Liberation Sans';font-size:18px;line-height:18px;font-weight:400;font-style:normal;color:#111;letter-spacing:0.000px;white-space:pre;-webkit-text-stroke:0.2px #111;">B</div><div style="position:absolute;left:650.13px;top:881.16px;font-family:'Liberation Sans';font-size:18px;line-height:18px;font-weight:400;font-style:normal;color:#111;letter-spacing:1.150px;white-space:pre;-webkit-text-stroke:0.2px #111;">5.43</div><div style="position:absolute;left:716.80px;top:881.16px;font-family:'Liberation Sans';font-size:18px;line-height:18px;font-weight:400;font-style:normal;color:#111;letter-spacing:0.000px;white-space:pre;-webkit-text-stroke:0.2px #111;">$</div><div style="position:absolute;left:824.60px;top:881.16px;font-family:'Liberation Sans';font-size:18px;line-height:18px;font-weight:400;font-style:normal;color:#111;letter-spacing:0.000px;white-space:pre;-webkit-text-stroke:0.2px #111;">B</div><div style="position:absolute;left:782.53px;top:881.16px;font-family:'Liberation Sans';font-size:18px;line-height:18px;font-weight:400;font-style:normal;color:#111;letter-spacing:1.150px;white-space:pre;-webkit-text-stroke:0.2px #111;">0.64</div><div style="position:absolute;left:848.80px;top:881.16px;font-family:'Liberation Sans';font-size:18px;line-height:18px;font-weight:400;font-style:normal;color:#111;letter-spacing:0.000px;white-space:pre;-webkit-text-stroke:0.2px #111;">$</div><div style="position:absolute;left:978.80px;top:881.16px;font-family:'Liberation Sans';font-size:18px;line-height:18px;font-weight:400;font-style:normal;color:#111;letter-spacing:0.000px;white-space:pre;-webkit-text-stroke:0.2px #111;">B</div><div style="position:absolute;left:925.57px;top:881.16px;font-family:'Liberation Sans';font-size:18px;line-height:18px;font-weight:400;font-style:normal;color:#111;letter-spacing:1.150px;white-space:pre;-webkit-text-stroke:0.2px #111;">10.17</div><div style="position:absolute;left:238.17px;top:914.16px;font-family:'Liberation Sans';font-size:18px;line-height:18px;font-weight:400;font-style:normal;color:#111;letter-spacing:1.200px;white-space:pre;-webkit-text-stroke:0.2px #111;">2016</div><div style="position:absolute;left:293.50px;top:914.16px;font-family:'Liberation Sans';font-size:18px;line-height:18px;font-weight:400;font-style:normal;color:#111;letter-spacing:0.000px;white-space:pre;-webkit-text-stroke:0.2px #111;">$</div><div style="position:absolute;left:401.40px;top:914.16px;font-family:'Liberation Sans';font-size:18px;line-height:18px;font-weight:400;font-style:normal;color:#111;letter-spacing:0.000px;white-space:pre;-webkit-text-stroke:0.2px #111;">B</div><div style="position:absolute;left:348.17px;top:914.16px;font-family:'Liberation Sans';font-size:18px;line-height:18px;font-weight:400;font-style:normal;color:#111;letter-spacing:1.150px;white-space:pre;-webkit-text-stroke:0.2px #111;">23.64</div><div style="position:absolute;left:426.00px;top:914.16px;font-family:'Liberation Sans';font-size:18px;line-height:18px;font-weight:400;font-style:normal;color:#111;letter-spacing:0.000px;white-space:pre;-webkit-text-stroke:0.2px #111;">$</div><div style="position:absolute;left:560.60px;top:914.16px;font-family:'Liberation Sans';font-size:18px;line-height:18px;font-weight:400;font-style:normal;color:#111;letter-spacing:0.000px;white-space:pre;-webkit-text-stroke:0.2px #111;">B</div><div style="position:absolute;left:507.37px;top:914.16px;font-family:'Liberation Sans';font-size:18px;line-height:18px;font-weight:400;font-style:normal;color:#111;letter-spacing:1.150px;white-space:pre;-webkit-text-stroke:0.2px #111;">70.02</div><div style="position:absolute;left:584.80px;top:914.16px;font-family:'Liberation Sans';font-size:18px;line-height:18px;font-weight:400;font-style:normal;color:#111;letter-spacing:0.000px;white-space:pre;-webkit-text-stroke:0.2px #111;">$</div><div style="position:absolute;left:692.20px;top:914.16px;font-family:'Liberation Sans';font-size:18px;line-height:18px;font-weight:400;font-style:normal;color:#111;letter-spacing:0.000px;white-space:pre;-webkit-text-stroke:0.2px #111;">B</div><div style="position:absolute;left:650.13px;top:914.16px;font-family:'Liberation Sans';font-size:18px;line-height:18px;font-weight:400;font-style:normal;color:#111;letter-spacing:1.150px;white-space:pre;-webkit-text-stroke:0.2px #111;">4.97</div><div style="position:absolute;left:716.80px;top:914.16px;font-family:'Liberation Sans';font-size:18px;line-height:18px;font-weight:400;font-style:normal;color:#111;letter-spacing:0.000px;white-space:pre;-webkit-text-stroke:0.2px #111;">$</div><div style="position:absolute;left:824.60px;top:914.16px;font-family:'Liberation Sans';font-size:18px;line-height:18px;font-weight:400;font-style:normal;color:#111;letter-spacing:0.000px;white-space:pre;-webkit-text-stroke:0.2px #111;">B</div><div style="position:absolute;left:782.53px;top:914.16px;font-family:'Liberation Sans';font-size:18px;line-height:18px;font-weight:400;font-style:normal;color:#111;letter-spacing:1.150px;white-space:pre;-webkit-text-stroke:0.2px #111;">0.51</div><div style="position:absolute;left:848.80px;top:914.16px;font-family:'Liberation Sans';font-size:18px;line-height:18px;font-weight:400;font-style:normal;color:#111;letter-spacing:0.000px;white-space:pre;-webkit-text-stroke:0.2px #111;">$</div><div style="position:absolute;left:978.80px;top:914.16px;font-family:'Liberation Sans';font-size:18px;line-height:18px;font-weight:400;font-style:normal;color:#111;letter-spacing:0.000px;white-space:pre;-webkit-text-stroke:0.2px #111;">B</div><div style="position:absolute;left:936.73px;top:914.16px;font-family:'Liberation Sans';font-size:18px;line-height:18px;font-weight:400;font-style:normal;color:#111;letter-spacing:1.150px;white-space:pre;-webkit-text-stroke:0.2px #111;">8.65</div><div style="position:absolute;left:238.17px;top:947.16px;font-family:'Liberation Sans';font-size:18px;line-height:18px;font-weight:400;font-style:normal;color:#111;letter-spacing:1.200px;white-space:pre;-webkit-text-stroke:0.2px #111;">2015</div><div style="position:absolute;left:293.50px;top:947.16px;font-family:'Liberation Sans';font-size:18px;line-height:18px;font-weight:400;font-style:normal;color:#111;letter-spacing:0.000px;white-space:pre;-webkit-text-stroke:0.2px #111;">$</div><div style="position:absolute;left:401.40px;top:947.16px;font-family:'Liberation Sans';font-size:18px;line-height:18px;font-weight:400;font-style:normal;color:#111;letter-spacing:0.000px;white-space:pre;-webkit-text-stroke:0.2px #111;">B</div><div style="position:absolute;left:348.17px;top:947.16px;font-family:'Liberation Sans';font-size:18px;line-height:18px;font-weight:400;font-style:normal;color:#111;letter-spacing:1.150px;white-space:pre;-webkit-text-stroke:0.2px #111;">22.06</div><div style="position:absolute;left:426.00px;top:947.16px;font-family:'Liberation Sans';font-size:18px;line-height:18px;font-weight:400;font-style:normal;color:#111;letter-spacing:0.000px;white-space:pre;-webkit-text-stroke:0.2px #111;">$</div><div style="position:absolute;left:560.60px;top:947.16px;font-family:'Liberation Sans';font-size:18px;line-height:18px;font-weight:400;font-style:normal;color:#111;letter-spacing:0.000px;white-space:pre;-webkit-text-stroke:0.2px #111;">B</div><div style="position:absolute;left:507.37px;top:947.16px;font-family:'Liberation Sans';font-size:18px;line-height:18px;font-weight:400;font-style:normal;color:#111;letter-spacing:1.150px;white-space:pre;-webkit-text-stroke:0.2px #111;">65.83</div><div style="position:absolute;left:584.80px;top:947.16px;font-family:'Liberation Sans';font-size:18px;line-height:18px;font-weight:400;font-style:normal;color:#111;letter-spacing:0.000px;white-space:pre;-webkit-text-stroke:0.2px #111;">$</div><div style="position:absolute;left:692.20px;top:947.16px;font-family:'Liberation Sans';font-size:18px;line-height:18px;font-weight:400;font-style:normal;color:#111;letter-spacing:0.000px;white-space:pre;-webkit-text-stroke:0.2px #111;">B</div><div style="position:absolute;left:650.13px;top:947.16px;font-family:'Liberation Sans';font-size:18px;line-height:18px;font-weight:400;font-style:normal;color:#111;letter-spacing:1.150px;white-space:pre;-webkit-text-stroke:0.2px #111;">4.68</div><div style="position:absolute;left:716.80px;top:947.16px;font-family:'Liberation Sans';font-size:18px;line-height:18px;font-weight:400;font-style:normal;color:#111;letter-spacing:0.000px;white-space:pre;-webkit-text-stroke:0.2px #111;">$</div><div style="position:absolute;left:824.60px;top:947.16px;font-family:'Liberation Sans';font-size:18px;line-height:18px;font-weight:400;font-style:normal;color:#111;letter-spacing:0.000px;white-space:pre;-webkit-text-stroke:0.2px #111;">B</div><div style="position:absolute;left:782.53px;top:947.16px;font-family:'Liberation Sans';font-size:18px;line-height:18px;font-weight:400;font-style:normal;color:#111;letter-spacing:1.150px;white-space:pre;-webkit-text-stroke:0.2px #111;">0.47</div><div style="position:absolute;left:848.80px;top:947.16px;font-family:'Liberation Sans';font-size:18px;line-height:18px;font-weight:400;font-style:normal;color:#111;letter-spacing:0.000px;white-space:pre;-webkit-text-stroke:0.2px #111;">$</div><div style="position:absolute;left:978.80px;top:947.16px;font-family:'Liberation Sans';font-size:18px;line-height:18px;font-weight:400;font-style:normal;color:#111;letter-spacing:0.000px;white-space:pre;-webkit-text-stroke:0.2px #111;">B</div><div style="position:absolute;left:936.73px;top:947.16px;font-family:'Liberation Sans';font-size:18px;line-height:18px;font-weight:400;font-style:normal;color:#111;letter-spacing:1.150px;white-space:pre;-webkit-text-stroke:0.2px #111;">8.33</div><div style="position:absolute;left:238.17px;top:980.16px;font-family:'Liberation Sans';font-size:18px;line-height:18px;font-weight:400;font-style:normal;color:#111;letter-spacing:1.200px;white-space:pre;-webkit-text-stroke:0.2px #111;height:14.84px;overflow:hidden;">2014</div><div style="position:absolute;left:293.50px;top:980.16px;font-family:'Liberation Sans';font-size:18px;line-height:18px;font-weight:400;font-style:normal;color:#111;letter-spacing:0.000px;white-space:pre;-webkit-text-stroke:0.2px #111;height:14.84px;overflow:hidden;">$</div><div style="position:absolute;left:401.40px;top:980.16px;font-family:'Liberation Sans';font-size:18px;line-height:18px;font-weight:400;font-style:normal;color:#111;letter-spacing:0.000px;white-space:pre;-webkit-text-stroke:0.2px #111;height:14.84px;overflow:hidden;">B</div><div style="position:absolute;left:348.17px;top:980.16px;font-family:'Liberation Sans';font-size:18px;line-height:18px;font-weight:400;font-style:normal;color:#111;letter-spacing:1.150px;white-space:pre;-webkit-text-stroke:0.2px #111;height:14.84px;overflow:hidden;">20.41</div><div style="position:absolute;left:426.00px;top:980.16px;font-family:'Liberation Sans';font-size:18px;line-height:18px;font-weight:400;font-style:normal;color:#111;letter-spacing:0.000px;white-space:pre;-webkit-text-stroke:0.2px #111;height:14.84px;overflow:hidden;">$</div><div style="position:absolute;left:560.60px;top:980.16px;font-family:'Liberation Sans';font-size:18px;line-height:18px;font-weight:400;font-style:normal;color:#111;letter-spacing:0.000px;white-space:pre;-webkit-text-stroke:0.2px #111;height:14.84px;overflow:hidden;">B</div><div style="position:absolute;left:507.37px;top:980.16px;font-family:'Liberation Sans';font-size:18px;line-height:18px;font-weight:400;font-style:normal;color:#111;letter-spacing:1.150px;white-space:pre;-webkit-text-stroke:0.2px #111;height:14.84px;overflow:hidden;">61.91</div><div style="position:absolute;left:584.80px;top:980.16px;font-family:'Liberation Sans';font-size:18px;line-height:18px;font-weight:400;font-style:normal;color:#111;letter-spacing:0.000px;white-space:pre;-webkit-text-stroke:0.2px #111;height:14.84px;overflow:hidden;">$</div><div style="position:absolute;left:692.20px;top:980.16px;font-family:'Liberation Sans';font-size:18px;line-height:18px;font-weight:400;font-style:normal;color:#111;letter-spacing:0.000px;white-space:pre;-webkit-text-stroke:0.2px #111;height:14.84px;overflow:hidden;">B</div><div style="position:absolute;left:650.13px;top:980.16px;font-family:'Liberation Sans';font-size:18px;line-height:18px;font-weight:400;font-style:normal;color:#111;letter-spacing:1.150px;white-space:pre;-webkit-text-stroke:0.2px #111;height:14.84px;overflow:hidden;">4.34</div><div style="position:absolute;left:716.80px;top:980.16px;font-family:'Liberation Sans';font-size:18px;line-height:18px;font-weight:400;font-style:normal;color:#111;letter-spacing:0.000px;white-space:pre;-webkit-text-stroke:0.2px #111;height:14.84px;overflow:hidden;">$</div><div style="position:absolute;left:824.60px;top:980.16px;font-family:'Liberation Sans';font-size:18px;line-height:18px;font-weight:400;font-style:normal;color:#111;letter-spacing:0.000px;white-space:pre;-webkit-text-stroke:0.2px #111;height:14.84px;overflow:hidden;">B</div><div style="position:absolute;left:782.53px;top:980.16px;font-family:'Liberation Sans';font-size:18px;line-height:18px;font-weight:400;font-style:normal;color:#111;letter-spacing:1.150px;white-space:pre;-webkit-text-stroke:0.2px #111;height:14.84px;overflow:hidden;">0.41</div><div style="position:absolute;left:848.80px;top:980.16px;font-family:'Liberation Sans';font-size:18px;line-height:18px;font-weight:400;font-style:normal;color:#111;letter-spacing:0.000px;white-space:pre;-webkit-text-stroke:0.2px #111;height:14.84px;overflow:hidden;">$</div><div style="position:absolute;left:978.80px;top:980.16px;font-family:'Liberation Sans';font-size:18px;line-height:18px;font-weight:400;font-style:normal;color:#111;letter-spacing:0.000px;white-space:pre;-webkit-text-stroke:0.2px #111;height:14.84px;overflow:hidden;">B</div><div style="position:absolute;left:936.73px;top:980.16px;font-family:'Liberation Sans';font-size:18px;line-height:18px;font-weight:400;font-style:normal;color:#111;letter-spacing:1.150px;white-space:pre;-webkit-text-stroke:0.2px #111;height:14.84px;overflow:hidden;">8.04</div><div style="position:absolute;left:155.80px;top:1037.72px;font-family:'Liberation Sans';font-size:19px;line-height:19px;font-weight:400;font-style:normal;color:#111;letter-spacing:0.792px;white-space:pre;-webkit-text-stroke:0.2px #111;">Snowflake Data</div><div style="position:absolute;left:790.00px;top:1028.16px;font-family:'Liberation Sans';font-size:16px;line-height:16px;font-weight:400;font-style:normal;color:#444;letter-spacing:0.893px;white-space:pre;-webkit-text-stroke:0.2px #444;">Table Updated</div><div style="position:absolute;left:794.00px;top:1050.16px;font-family:'Liberation Sans';font-size:16px;line-height:16px;font-weight:400;font-style:normal;color:#444;letter-spacing:0.699px;white-space:pre;-webkit-text-stroke:0.2px #444;">5 minutes ago</div><div style="position:absolute;left:927.00px;top:1028.16px;font-family:'Liberation Sans';font-size:16px;line-height:16px;font-weight:400;font-style:normal;color:#444;letter-spacing:0.633px;white-space:pre;-webkit-text-stroke:0.2px #444;">Table Rows</div><div style="position:absolute;left:922.30px;top:1050.16px;font-family:'Liberation Sans';font-size:16px;line-height:16px;font-weight:400;font-style:normal;color:#444;letter-spacing:1.436px;white-space:pre;-webkit-text-stroke:0.2px #444;">31,193,383</div><div style="position:absolute;left:1067.80px;top:147.78px;font-family:'Liberation Sans';font-size:24px;line-height:24px;font-weight:700;font-style:normal;color:#111;letter-spacing:0.356px;white-space:pre;">Configure connected table</div><div style="position:absolute;left:1136.80px;top:225.96px;font-family:'Liberation Sans';font-size:18px;line-height:18px;font-weight:400;font-style:normal;color:#333;letter-spacing:1.468px;white-space:pre;-webkit-text-stroke:0.2px #333;">Row Zero Snowflake (OAuth)</div><div style="position:absolute;left:1155.80px;top:253.61px;font-family:'Liberation Sans';font-size:17px;line-height:17px;font-weight:400;font-style:normal;color:#333;letter-spacing:0.428px;white-space:pre;-webkit-text-stroke:0.2px #333;">Connected</div><div style="position:absolute;left:1066.60px;top:316.99px;font-family:'Liberation Sans';font-size:17.5px;line-height:17.5px;font-weight:700;font-style:normal;color:#222;letter-spacing:0.616px;white-space:pre;">Database</div><div style="position:absolute;left:1080.20px;top:358.99px;font-family:'Liberation Sans';font-size:17.5px;line-height:17.5px;font-weight:400;font-style:normal;color:#111;letter-spacing:0.571px;white-space:pre;-webkit-text-stroke:0.2px #111;">DEMO</div><div style="position:absolute;left:1483.00px;top:316.99px;font-family:'Liberation Sans';font-size:17.5px;line-height:17.5px;font-weight:700;font-style:normal;color:#222;letter-spacing:0.342px;white-space:pre;">Schema</div><div style="position:absolute;left:1495.40px;top:358.99px;font-family:'Liberation Sans';font-size:17.5px;line-height:17.5px;font-weight:400;font-style:normal;color:#111;letter-spacing:0.465px;white-space:pre;-webkit-text-stroke:0.2px #111;">PUBLIC</div><div style="position:absolute;left:1067.60px;top:425.79px;font-family:'Liberation Sans';font-size:17.5px;line-height:17.5px;font-weight:700;font-style:normal;color:#222;letter-spacing:0.389px;white-space:pre;">Query</div><div style="position:absolute;left:1735.00px;top:420.09px;font-family:'Liberation Sans';font-size:17.5px;line-height:17.5px;font-weight:700;font-style:normal;color:#222;letter-spacing:0.374px;white-space:pre;">Create variable</div><div style="position:absolute;left:1088.80px;top:464.11px;font-family:'Liberation Mono';font-size:19.43px;line-height:19.43px;font-weight:400;font-style:normal;color:#111;letter-spacing:0.000px;white-space:pre;-webkit-text-stroke:0.2px #111;">1</div><div style="position:absolute;left:1128.10px;top:465.61px;font-family:'Liberation Mono';font-size:19.43px;line-height:19.43px;font-weight:400;font-style:normal;color:#111;letter-spacing:0.000px;white-space:pre;-webkit-text-stroke:0.2px #111;"><span style="color:#770088">select</span> <span style="display:inline-block;transform:translateY(3.8px) scale(1.35)">*</span> <span style="color:#770088">from</span> ny_hospital_data</div><div style="position:absolute;left:1086.50px;top:800.41px;font-family:'Liberation Sans';font-size:17px;line-height:17px;font-weight:400;font-style:normal;color:#111;letter-spacing:1.314px;white-space:pre;-webkit-text-stroke:0.2px #111;">Console</div><div style="position:absolute;left:1710.50px;top:801.19px;font-family:'Liberation Sans';font-size:17.5px;line-height:17.5px;font-weight:400;font-style:normal;color:#111;letter-spacing:0.815px;white-space:pre;-webkit-text-stroke:0.2px #111;">Run</div><div style="position:absolute;left:1797.50px;top:801.19px;font-family:'Liberation Sans';font-size:17.5px;line-height:17.5px;font-weight:400;font-style:normal;color:#111;letter-spacing:0.696px;white-space:pre;-webkit-text-stroke:0.2px #111;">Run All</div><div style="position:absolute;left:1085.50px;top:864.01px;font-family:'Liberation Mono';font-size:19.43px;line-height:19.43px;font-weight:400;font-style:normal;color:#111;letter-spacing:0.000px;white-space:pre;-webkit-text-stroke:0.2px #111;">Complete: imported 31,193,383 rows in 8 seconds</div><div style="position:absolute;left:651.80px;top:71.28px;font-family:'Liberation Sans';font-size:24px;line-height:24px;font-weight:400;font-style:normal;color:#222;letter-spacing:0.000px;white-space:pre;-webkit-text-stroke:0.2px #222;">$</div><div style="position:absolute;left:370.00px;top:224.59px;font-family:'Liberation Sans';font-size:26px;line-height:26px;font-weight:400;font-style:normal;color:#444;letter-spacing:1.224px;white-space:pre;-webkit-text-stroke:0.2px #444;">NY State Hospital Admissions</div><div style="position:absolute;left:194.30px;top:306.14px;font-family:'Liberation Sans';font-size:18.5px;line-height:18.5px;font-weight:400;font-style:normal;color:#444;letter-spacing:0.545px;white-space:pre;-webkit-text-stroke:0.2px #444;">150B</div><div style="position:absolute;left:193.70px;top:392.14px;font-family:'Liberation Sans';font-size:18.5px;line-height:18.5px;font-weight:400;font-style:normal;color:#444;letter-spacing:0.745px;white-space:pre;-webkit-text-stroke:0.2px #444;">100B</div><div style="position:absolute;left:203.70px;top:476.94px;font-family:'Liberation Sans';font-size:18.5px;line-height:18.5px;font-weight:400;font-style:normal;color:#444;letter-spacing:1.211px;white-space:pre;-webkit-text-stroke:0.2px #444;">50B</div><div style="position:absolute;left:228.60px;top:562.04px;font-family:'Liberation Sans';font-size:18.5px;line-height:18.5px;font-weight:400;font-style:normal;color:#444;letter-spacing:0.000px;white-space:pre;-webkit-text-stroke:0.2px #444;">0</div><div style="position:absolute;left:285.20px;top:575.72px;font-family:'Liberation Sans';font-size:19px;line-height:19px;font-weight:400;font-style:normal;color:#444;letter-spacing:0.266px;white-space:pre;-webkit-text-stroke:0.2px #444;">2010</div><div style="position:absolute;left:503.10px;top:575.82px;font-family:'Liberation Sans';font-size:19px;line-height:19px;font-weight:400;font-style:normal;color:#444;letter-spacing:-0.200px;white-space:pre;-webkit-text-stroke:0.2px #444;">2015</div><div style="position:absolute;left:720.40px;top:575.82px;font-family:'Liberation Sans';font-size:19px;line-height:19px;font-weight:400;font-style:normal;color:#444;letter-spacing:-0.034px;white-space:pre;-webkit-text-stroke:0.2px #444;">2020</div><div style="position:absolute;left:499.10px;top:637.38px;font-family:'Liberation Sans';font-size:24px;line-height:24px;font-weight:400;font-style:normal;color:#444;letter-spacing:0.433px;white-space:pre;-webkit-text-stroke:0.2px #444;">Year</div><div style="position:absolute;left:867.40px;top:309.09px;font-family:'Liberation Sans';font-size:19.5px;line-height:19.5px;font-weight:400;font-style:normal;color:#444;letter-spacing:0.237px;white-space:pre;-webkit-text-stroke:0.2px #444;">Trauma</div><div style="position:absolute;left:866.40px;top:339.04px;font-family:'Liberation Sans';font-size:19.5px;line-height:19.5px;font-weight:400;font-style:normal;color:#444;letter-spacing:1.151px;white-space:pre;-webkit-text-stroke:0.2px #444;">Newborn</div><div style="position:absolute;left:866.40px;top:368.99px;font-family:'Liberation Sans';font-size:19.5px;line-height:19.5px;font-weight:400;font-style:normal;color:#444;letter-spacing:0.598px;white-space:pre;-webkit-text-stroke:0.2px #444;">Urgent</div><div style="position:absolute;left:866.40px;top:398.94px;font-family:'Liberation Sans';font-size:19.5px;line-height:19.5px;font-weight:400;font-style:normal;color:#444;letter-spacing:0.667px;white-space:pre;-webkit-text-stroke:0.2px #444;">Elective</div><div style="position:absolute;left:866.40px;top:428.89px;font-family:'Liberation Sans';font-size:19.5px;line-height:19.5px;font-weight:400;font-style:normal;color:#444;letter-spacing:0.528px;white-space:pre;-webkit-text-stroke:0.2px #444;">Emergency</div><div style="position:absolute;left:178.00px;top:510.20px;width:0;height:0;transform-origin:0 0;transform:rotate(-90deg);"><div style="position:absolute;left:0;top:-20.32px;font-family:'Liberation Sans';font-size:24px;line-height:24px;font-weight:400;color:#444;letter-spacing:0.593px;white-space:pre">Total Charges</div></div>
<svg width="1909" height="1074" viewBox="0 0 1909 1074" style="position:absolute;left:0;top:0">
<circle cx="32" cy="26.2" r="15.2" fill="#fff"/><ellipse cx="32.2" cy="26.1" rx="6.6" ry="8.0" transform="rotate(12 32.2 26.1)" fill="#2d2d2d"/><line x1="45" y1="12.4" x2="19.6" y2="37.8" stroke="#2d2d2d" stroke-width="2.3" stroke-linecap="butt"/><path d="M1156,36 C1151,36 1149.5,32.5 1149.5,30.5 C1149.5,27.5 1152,25.3 1155,25.3 C1155.8,20.5 1160,17.8 1164,17.8 C1168.5,17.8 1172,21 1172.6,25 C1176.5,25 1179,27.7 1179,30.8 C1179,33.8 1176.8,36 1173.5,36 Z" stroke="#8a8a8a" stroke-width="2" fill="none" stroke-linecap="round" stroke-linejoin="round" /><path d="M1159.5,29 L1163,32.5 L1169,25.5" stroke="#8a8a8a" stroke-width="2" fill="none" stroke-linecap="round" stroke-linejoin="round" /><path d="M1684.3,32.6 C1684,30.8 1681,29.6 1681,26.9 C1681,23.6 1683.7,21.1 1687,21.1 C1690.3,21.1 1693,23.6 1693,26.9 C1693,29.6 1690,30.8 1689.7,32.6 Z" stroke="#d2d2d2" stroke-width="1.6" fill="none" stroke-linecap="round" stroke-linejoin="round" /><line x1="1684.6" y1="34.3" x2="1689.4" y2="34.3" stroke="#d2d2d2" stroke-width="1.4" stroke-linecap="butt"/><line x1="1684.6" y1="36.1" x2="1689.4" y2="36.1" stroke="#d2d2d2" stroke-width="1.4" stroke-linecap="butt"/><line x1="1685.2" y1="37.9" x2="1688.8" y2="37.9" stroke="#d2d2d2" stroke-width="1.4" stroke-linecap="butt"/><line x1="1687" y1="15.4" x2="1687" y2="19.2" stroke="#d2d2d2" stroke-width="1.8" stroke-linecap="butt"/><line x1="1678.6" y1="19.1" x2="1681.2" y2="21.5" stroke="#d2d2d2" stroke-width="1.6" stroke-linecap="butt"/><line x1="1695.4" y1="19.1" x2="1692.8" y2="21.5" stroke="#d2d2d2" stroke-width="1.6" stroke-linecap="butt"/><line x1="1675.3" y1="27.4" x2="1679.8" y2="27.4" stroke="#d2d2d2" stroke-width="1.6" stroke-linecap="butt"/><line x1="1694.2" y1="27.4" x2="1698.6" y2="27.4" stroke="#d2d2d2" stroke-width="1.6" stroke-linecap="butt"/><circle cx="1749.6" cy="21.4" r="4.6" fill="none" stroke="#fff" stroke-width="1.9"/><path d="M1742.9,37 C1742.9,32.5 1745,29.8 1749.5,29.8 C1751.8,29.8 1753.6,30.2 1755,31" stroke="#fff" stroke-width="1.9" fill="none" stroke-linecap="round" stroke-linejoin="round" /><path d="M1757.2,16.6 C1759.6,17.5 1761.1,19.2 1761.1,21.3 C1761.1,23.4 1759.6,25.1 1757.2,26" stroke="#fff" stroke-width="1.9" fill="none" stroke-linecap="round" stroke-linejoin="round" /><line x1="1760.6" y1="30.6" x2="1760.6" y2="38.8" stroke="#fff" stroke-width="1.9" stroke-linecap="butt"/><line x1="1756.4" y1="34.7" x2="1764.8" y2="34.7" stroke="#fff" stroke-width="1.9" stroke-linecap="butt"/><circle cx="1883" cy="23.4" r="4.5" fill="none" stroke="#e6e6e6" stroke-width="1.5"/><path d="M1875.3,34.4 C1875.6,30.5 1878.8,28.3 1883,28.3 C1887.2,28.3 1890.4,30.5 1890.7,34.4 Z" stroke="#e6e6e6" stroke-width="1.5" fill="none" stroke-linecap="round" stroke-linejoin="round" /><path d="M31.5,92.6 A8.4,8.4 0 1 0 24.3,81.3" stroke="#222" stroke-width="1.9" fill="none" stroke-linecap="round" stroke-linejoin="round" /><path d="M20.8,81 L24,85.2 L27.6,81.4" stroke="#222" stroke-width="1.9" fill="none" stroke-linecap="round" stroke-linejoin="round" /><path d="M78.2,92.6 A8.4,8.4 0 1 1 85.4,81.3" stroke="#222" stroke-width="1.9" fill="none" stroke-linecap="round" stroke-linejoin="round" /><path d="M88.9,81 L85.7,85.2 L82.1,81.4" stroke="#222" stroke-width="1.9" fill="none" stroke-linecap="round" stroke-linejoin="round" /><path d="M138.4,74.8 H147.3 C150.4,74.8 151.4,76.9 151.4,79.1 C151.4,81.6 149.8,83.6 146.8,83.6 H141.6 M146.8,83.6 C151.1,83.6 152.6,85.7 152.6,88.3 C152.6,91 150.8,93 147.3,93 H138.4" stroke="#222" stroke-width="2.7" fill="none" stroke-linecap="butt" stroke-linejoin="miter" /><line x1="141.6" y1="74.8" x2="141.6" y2="93" stroke="#222" stroke-width="2.7" stroke-linecap="butt"/><line x1="193" y1="75" x2="200.5" y2="75" stroke="#222" stroke-width="2.2" stroke-linecap="round"/><line x1="197" y1="75" x2="185" y2="93" stroke="#222" stroke-width="2.2" stroke-linecap="round"/><line x1="181.5" y1="93" x2="189" y2="93" stroke="#222" stroke-width="2.2" stroke-linecap="round"/><line x1="227" y1="75" x2="233" y2="75" stroke="#222" stroke-width="2" stroke-linecap="round"/><line x1="237" y1="75" x2="244" y2="75" stroke="#222" stroke-width="2" stroke-linecap="round"/><path d="M229.8,75 V84.5 C229.8,88.5 232,90.5 235.5,90.5 C239,90.5 241.2,88.5 241.2,84.5 V75" stroke="#222" stroke-width="2" fill="none" stroke-linecap="round" stroke-linejoin="round" /><line x1="227" y1="93.3" x2="244.5" y2="93.3" stroke="#222" stroke-width="2" stroke-linecap="round"/><line x1="281.5" y1="84" x2="287.5" y2="84" stroke="#222" stroke-width="1.8" stroke-linecap="round"/><line x1="363.3" y1="85.1" x2="374.7" y2="85.1" stroke="#222" stroke-width="1.8" stroke-linecap="round"/><line x1="369" y1="79.5" x2="369" y2="90.7" stroke="#222" stroke-width="1.8" stroke-linecap="round"/><path d="M427.5,87.5 L433.8,75 L440.2,87.5" stroke="#222" stroke-width="1.8" fill="none" stroke-linecap="round" stroke-linejoin="round" /><line x1="430" y1="83" x2="437.6" y2="83" stroke="#222" stroke-width="1.8" stroke-linecap="round"/><line x1="425.8" y1="87.8" x2="430" y2="87.8" stroke="#222" stroke-width="1.6" stroke-linecap="round"/><line x1="437.6" y1="87.8" x2="442" y2="87.8" stroke="#222" stroke-width="1.6" stroke-linecap="round"/><line x1="425.8" y1="93.8" x2="443.6" y2="93.8" stroke="#000" stroke-width="2.8" stroke-linecap="round"/><path d="M462.5,81 L468.15,86.8 L473.8,81" stroke="#222" stroke-width="2" fill="none" stroke-linecap="round" stroke-linejoin="round" /><path d="M501.2,74.3 L503.2,77.3 M495.4,83 L502.4,76.4 L509.6,82.8 H495.4 L500.6,88.3 L506.4,82.8" stroke="#222" stroke-width="1.8" fill="none" stroke-linecap="round" stroke-linejoin="round" /><path d="M509.7,84.4 C510.8,86 511.3,86.9 511.3,87.6 C511.3,88.6 510.6,89.2 509.7,89.2 C508.8,89.2 508.1,88.6 508.1,87.6 C508.1,86.9 508.6,86 509.7,84.4 Z" fill="#222"/><line x1="494.5" y1="93.8" x2="511.8" y2="93.8" stroke="#a0a0a0" stroke-width="2.6" stroke-linecap="round"/><path d="M531.6,81 L537.1,86.8 L542.6,81" stroke="#222" stroke-width="2" fill="none" stroke-linecap="round" stroke-linejoin="round" /><rect x="562.5" y="74.4" width="19.2" height="19" fill="none" stroke="#222" stroke-width="2.4"/><line x1="572.1" y1="74.4" x2="572.1" y2="93.4" stroke="#222" stroke-width="2.2" stroke-linecap="butt"/><line x1="562.5" y1="83.9" x2="581.7" y2="83.9" stroke="#222" stroke-width="2.2" stroke-linecap="butt"/><path d="M600.6,81 L606.2,86.8 L611.8,81" stroke="#222" stroke-width="2" fill="none" stroke-linecap="round" stroke-linejoin="round" /><line x1="694" y1="93.2" x2="712" y2="75.2" stroke="#222" stroke-width="2.2" stroke-linecap="round"/><circle cx="697" cy="78.7" r="2.6" fill="none" stroke="#222" stroke-width="1.9"/><circle cx="708.5" cy="90.2" r="2.6" fill="none" stroke="#222" stroke-width="1.9"/><circle cx="747.8" cy="77.3" r="3.2" fill="#222"/><path d="M750.5,77.5 C751.5,82 749.5,88 743.5,93.3" stroke="#222" stroke-width="2.1" fill="none" stroke-linecap="round" stroke-linejoin="round" /><ellipse cx="794.2" cy="79.7" rx="3.1" ry="5.0" fill="none" stroke="#222" stroke-width="1.6"/><circle cx="788.6" cy="85.3" r="1.1" fill="#222"/><path d="M788.3,91.1 H797.8 M791.1,88.5 L788.3,91.1 L791.1,93.7" stroke="#222" stroke-width="1.5" fill="none" stroke-linecap="round" stroke-linejoin="round" /><ellipse cx="834.2" cy="79.7" rx="3.1" ry="5.0" fill="none" stroke="#222" stroke-width="1.6"/><ellipse cx="843" cy="79.7" rx="3.1" ry="5.0" fill="none" stroke="#222" stroke-width="1.6"/><circle cx="829.8" cy="85.3" r="1.1" fill="#222"/><path d="M834.5,91.1 H845 M842.2,88.5 L845,91.1 L842.2,93.7" stroke="#222" stroke-width="1.5" fill="none" stroke-linecap="round" stroke-linejoin="round" /><path d="M1024.5,80.5 L1031.0,88.5 L1037.5,80.5" stroke="#222" stroke-width="2.2" fill="none" stroke-linecap="round" stroke-linejoin="round" /><path d="M1096.5,75 H1089 C1086.5,75 1085.5,76.5 1085.5,79 V80 M1085.5,87.5 V90.5 C1085.5,93 1086.5,94 1089,94 H1096.5" stroke="#222" stroke-width="2.2" fill="none" stroke-linecap="round" stroke-linejoin="round" /><path d="M1101.5,75 H1109 C1111.5,75 1112.5,76.5 1112.5,79 V80 M1112.5,87.5 V90.5 C1112.5,93 1111.5,94 1109,94 H1101.5" stroke="#222" stroke-width="2.2" fill="none" stroke-linecap="round" stroke-linejoin="round" /><path d="M1086.5,83.6 H1094.5 M1091,80.2 L1094.6,83.6 L1091,87" stroke="#222" stroke-width="1.9" fill="none" stroke-linecap="round" stroke-linejoin="round" /><path d="M1111.5,83.6 H1103.5 M1107,80.2 L1103.4,83.6 L1107,87" stroke="#222" stroke-width="1.9" fill="none" stroke-linecap="round" stroke-linejoin="round" /><line x1="1150" y1="75.5" x2="1170" y2="75.5" stroke="#222" stroke-width="2.3" stroke-linecap="round"/><line x1="1150" y1="81.2" x2="1163.5" y2="81.2" stroke="#222" stroke-width="2.3" stroke-linecap="round"/><line x1="1150" y1="86.8" x2="1170" y2="86.8" stroke="#222" stroke-width="2.3" stroke-linecap="round"/><line x1="1150" y1="92.3" x2="1163.5" y2="92.3" stroke="#222" stroke-width="2.3" stroke-linecap="round"/><line x1="1196.5" y1="75.5" x2="1213.5" y2="75.5" stroke="#222" stroke-width="2.3" stroke-linecap="round"/><line x1="1200.5" y1="81.2" x2="1210.5" y2="81.2" stroke="#222" stroke-width="2.3" stroke-linecap="round"/><line x1="1195" y1="86.8" x2="1215" y2="86.8" stroke="#222" stroke-width="2.3" stroke-linecap="round"/><line x1="1198" y1="92.3" x2="1212.5" y2="92.3" stroke="#222" stroke-width="2.3" stroke-linecap="round"/><line x1="1240" y1="75.5" x2="1260" y2="75.5" stroke="#222" stroke-width="2.3" stroke-linecap="round"/><line x1="1245.5" y1="81.2" x2="1260" y2="81.2" stroke="#222" stroke-width="2.3" stroke-linecap="round"/><line x1="1240" y1="86.8" x2="1260" y2="86.8" stroke="#222" stroke-width="2.3" stroke-linecap="round"/><line x1="1245.5" y1="92.3" x2="1260" y2="92.3" stroke="#222" stroke-width="2.3" stroke-linecap="round"/><line x1="1285.8" y1="74.2" x2="1304.5" y2="74.2" stroke="#222" stroke-width="2.3" stroke-linecap="round"/><line x1="1294.8" y1="78" x2="1294.8" y2="93.8" stroke="#222" stroke-width="2.4" stroke-linecap="round"/><path d="M1290.6,81.8 L1294.8,77.5 L1299,81.8" stroke="#222" stroke-width="2.2" fill="none" stroke-linecap="round" stroke-linejoin="round" /><line x1="1332.3" y1="84.2" x2="1348.2" y2="84.2" stroke="#222" stroke-width="2.3" stroke-linecap="round"/><line x1="1340.2" y1="74.8" x2="1340.2" y2="80.5" stroke="#222" stroke-width="2" stroke-linecap="round"/><path d="M1337.3,78.4 L1340.2,81.2 L1343.1,78.4" stroke="#222" stroke-width="2" fill="none" stroke-linecap="round" stroke-linejoin="round" /><line x1="1340.2" y1="88" x2="1340.2" y2="93.8" stroke="#222" stroke-width="2" stroke-linecap="round"/><path d="M1337.3,90 L1340.2,87.2 L1343.1,90" stroke="#222" stroke-width="2" fill="none" stroke-linecap="round" stroke-linejoin="round" /><line x1="1375.8" y1="93.2" x2="1394.2" y2="93.2" stroke="#222" stroke-width="2.3" stroke-linecap="round"/><line x1="1385" y1="73.5" x2="1385" y2="89.5" stroke="#222" stroke-width="2.4" stroke-linecap="round"/><path d="M1380.8,85.5 L1385,89.8 L1389.2,85.5" stroke="#222" stroke-width="2.2" fill="none" stroke-linecap="round" stroke-linejoin="round" /><line x1="1423.5" y1="78.3" x2="1437" y2="78.3" stroke="#222" stroke-width="2.3" stroke-linecap="round"/><path d="M1423.5,83.6 H1433.5 C1436,83.6 1437.6,85 1437.6,87 C1437.6,88.5 1436.5,89.6 1434,89.6 H1431" stroke="#222" stroke-width="2.2" fill="none" stroke-linecap="round" stroke-linejoin="round" /><path d="M1433.2,87.2 L1430.8,89.6 L1433.2,92" stroke="#222" stroke-width="1.8" fill="none" stroke-linecap="round" stroke-linejoin="round" /><line x1="1423.5" y1="89.6" x2="1427.2" y2="89.6" stroke="#222" stroke-width="2.3" stroke-linecap="round"/><rect x="1483.8" y="76" width="4.4" height="3.4" rx="1" fill="#222"/><rect x="1483.8" y="80.8" width="4.4" height="11.2" rx="1" fill="#222"/><rect x="1490.2" y="76" width="9.6" height="3.4" rx="1" fill="#222"/><path d="M1492.2,90.8 C1495.5,90 1498.5,87.5 1499,84.2" stroke="#222" stroke-width="1.9" fill="none" stroke-linecap="round" stroke-linejoin="round" /><path d="M1494.6,88.3 L1491.8,91 L1494.8,93" stroke="#222" stroke-width="1.7" fill="none" stroke-linecap="round" stroke-linejoin="round" /><path d="M1496.6,85.6 L1499.2,83.2 L1501.2,86.3" stroke="#222" stroke-width="1.7" fill="none" stroke-linecap="round" stroke-linejoin="round" /><path d="M1535.4,76.5 H1530.6 C1529.9,76.5 1529.4,77 1529.4,77.7 V90.2 C1529.4,90.9 1529.9,91.4 1530.6,91.4 H1543.2 C1543.9,91.4 1544.4,90.9 1544.4,90.2 V85.3" stroke="#222" stroke-width="2.1" fill="none" stroke-linecap="round" stroke-linejoin="round" /><line x1="1533.3" y1="83.2" x2="1533.3" y2="88.8" stroke="#222" stroke-width="2" stroke-linecap="butt"/><line x1="1537.1" y1="81" x2="1537.1" y2="88.8" stroke="#222" stroke-width="2" stroke-linecap="butt"/><line x1="1540.9" y1="85.3" x2="1540.9" y2="88.8" stroke="#222" stroke-width="2" stroke-linecap="butt"/><line x1="1542.6" y1="74.6" x2="1542.6" y2="81.6" stroke="#222" stroke-width="2" stroke-linecap="butt"/><line x1="1539.1" y1="78.6" x2="1546.1" y2="78.6" stroke="#222" stroke-width="2" stroke-linecap="butt"/><circle cx="1592.6" cy="84" r="1.9" fill="#222"/><circle cx="1598" cy="84" r="1.9" fill="#222"/><circle cx="1603.4" cy="84" r="1.9" fill="#222"/><ellipse cx="1691" cy="77.5" rx="9.6" ry="4" fill="none" stroke="#777" stroke-width="1.2"/><path d="M1681.4,77.5 V91 C1681.4,93.2 1685.7,95 1691,95 C1696.3,95 1700.6,93.2 1700.6,91 V77.5" stroke="#777" stroke-width="1.2" fill="none" stroke-linecap="round" stroke-linejoin="round" /><path d="M1681.4,82 C1681.4,84.2 1685.7,86 1691,86 C1696.3,86 1700.6,84.2 1700.6,82" stroke="#777" stroke-width="1.2" fill="none" stroke-linecap="round" stroke-linejoin="round" /><path d="M1681.4,86.5 C1681.4,88.7 1685.7,90.5 1691,90.5 C1696.3,90.5 1700.6,88.7 1700.6,86.5" stroke="#777" stroke-width="1.2" fill="none" stroke-linecap="round" stroke-linejoin="round" /><path d="M1808.2,79.2 L1803.6,84.2 L1808.2,89.2" stroke="#777" stroke-width="1.8" fill="none" stroke-linecap="round" stroke-linejoin="round" /><path d="M1821.8,79.2 L1826.4,84.2 L1821.8,89.2" stroke="#777" stroke-width="1.8" fill="none" stroke-linecap="round" stroke-linejoin="round" /><line x1="1817.2" y1="77.4" x2="1812.8" y2="90.6" stroke="#777" stroke-width="1.8" stroke-linecap="round"/><path d="M1000.5,132.3 L1007.25,139.7 L1014,132.3" stroke="#222" stroke-width="2" fill="none" stroke-linecap="round" stroke-linejoin="round" /><line x1="271.7" y1="724.5" x2="271.7" y2="740" stroke="#3d9aa8" stroke-width="1.6" stroke-linecap="round"/><path d="M266.5,735 L271.7,740.3 L276.9,735" stroke="#3d9aa8" stroke-width="1.6" fill="none" stroke-linecap="round" stroke-linejoin="round" /><path d="M397.5,729 L404.25,736 L411,729" stroke="#222" stroke-width="1.6" fill="none" stroke-linecap="round" stroke-linejoin="round" /><path d="M556,729 L563.0,736 L570,729" stroke="#222" stroke-width="1.6" fill="none" stroke-linecap="round" stroke-linejoin="round" /><path d="M688,729 L694.85,736 L701.7,729" stroke="#222" stroke-width="1.6" fill="none" stroke-linecap="round" stroke-linejoin="round" /><path d="M819.8,729 L826.9,736 L834,729" stroke="#222" stroke-width="1.6" fill="none" stroke-linecap="round" stroke-linejoin="round" /><path d="M974.6,729 L981.45,736 L988.3,729" stroke="#222" stroke-width="1.6" fill="none" stroke-linecap="round" stroke-linejoin="round" /><path d="M1018.4,200.3 L1013.2,209.8 L1023.6,209.8 Z" fill="#bdbdbd"/><path d="M1018.4,990.3 L1013.2,980.8 L1023.6,980.8 Z" fill="#bdbdbd"/><path d="M120.6,1006.3 L129.9,1001 L129.9,1011.7 Z" fill="#bdbdbd"/><path d="M1002.4,1006.4 L993.1,1001 L993.1,1011.8 Z" fill="#bdbdbd"/><line x1="32" y1="1038.6" x2="32" y2="1055.4" stroke="#222" stroke-width="2.6" stroke-linecap="butt"/><line x1="23.4" y1="1047" x2="40.6" y2="1047" stroke="#222" stroke-width="2.6" stroke-linecap="butt"/><line x1="87.3" y1="1040.7" x2="109" y2="1040.7" stroke="#222" stroke-width="2.6" stroke-linecap="butt"/><line x1="87.3" y1="1046.9" x2="109" y2="1046.9" stroke="#222" stroke-width="2.6" stroke-linecap="butt"/><line x1="87.3" y1="1053.2" x2="109" y2="1053.2" stroke="#222" stroke-width="2.6" stroke-linecap="butt"/><line x1="1859.5" y1="151.5" x2="1877.2" y2="169" stroke="#111" stroke-width="2" stroke-linecap="round"/><line x1="1877.2" y1="151.5" x2="1859.5" y2="169" stroke="#111" stroke-width="2" stroke-linecap="round"/><path d="M1096.6,228.3 L1096.6,239.4 L1086.9,233.9" stroke="#29b5e8" stroke-width="5" fill="none" stroke-linecap="round" stroke-linejoin="round"/><path d="M1106.3,228.3 L1106.3,239.4 L1116.0,233.9" stroke="#29b5e8" stroke-width="5" fill="none" stroke-linecap="round" stroke-linejoin="round"/><path d="M1082.3,242.1 L1091.8,247.4 L1082.3,252.7" stroke="#29b5e8" stroke-width="5" fill="none" stroke-linecap="round" stroke-linejoin="round"/><path d="M1120.3,242.1 L1110.8,247.4 L1120.3,252.7" stroke="#29b5e8" stroke-width="5" fill="none" stroke-linecap="round" stroke-linejoin="round"/><path d="M1096.6,266.6 L1096.6,255.4 L1086.9,260.7" stroke="#29b5e8" stroke-width="5" fill="none" stroke-linecap="round" stroke-linejoin="round"/><path d="M1106.3,266.6 L1106.3,255.4 L1116.0,260.7" stroke="#29b5e8" stroke-width="5" fill="none" stroke-linecap="round" stroke-linejoin="round"/><rect x="1098.5" y="244.6" width="5.6" height="5.6" transform="rotate(45 1101.3 247.4)" fill="none" stroke="#29b5e8" stroke-width="2.3"/><circle cx="1123" cy="231.3" r="1.6" fill="none" stroke="#8fd6f2" stroke-width="0.8"/><circle cx="1784.5" cy="247" r="2.3" fill="#333"/><circle cx="1791.8" cy="247" r="2.3" fill="#333"/><circle cx="1799.2" cy="247" r="2.3" fill="#333"/><rect x="1831.6" y="236.5" width="23.2" height="23.2" rx="2" fill="none" stroke="#444" stroke-width="2.4"/><rect x="1831.6" y="236.5" width="23.2" height="4.5" fill="#444"/><line x1="1835.7" y1="233.5" x2="1835.7" y2="237" stroke="#444" stroke-width="2" stroke-linecap="butt"/><line x1="1850.8" y1="233.5" x2="1850.8" y2="237" stroke="#444" stroke-width="2" stroke-linecap="butt"/><circle cx="1833.2" cy="258" r="7.6" fill="#5cb85c" stroke="#fafafa" stroke-width="0"/><path d="M1829.6,258.3 L1832.3,261 L1837.2,255.5" stroke="#fff" stroke-width="1.9" fill="none" stroke-linecap="round" stroke-linejoin="round" /><path d="M1442.5,363.5 L1448.0,369.5 L1453.5,363.5" stroke="#555" stroke-width="2" fill="none" stroke-linecap="round" stroke-linejoin="round" /><path d="M1858.5,363.5 L1864.0,369.5 L1869.5,363.5" stroke="#555" stroke-width="2" fill="none" stroke-linecap="round" stroke-linejoin="round" /><line x1="1716" y1="423" x2="1716" y2="433.6" stroke="#333" stroke-width="1.9" stroke-linecap="butt"/><line x1="1710.7" y1="428.3" x2="1721.3" y2="428.3" stroke="#333" stroke-width="1.9" stroke-linecap="butt"/><path d="M1692.8,806 L1701.4,811 L1692.8,816 Z" fill="#000"/><path d="M1776.8,806.3 L1783.2,811 L1776.8,815.7 Z M1783.2,806.3 L1789.6,811 L1783.2,815.7 Z" fill="#000"/><rect x="241" y="314.65" width="565" height="1.5" fill="#ebebeb"/><rect x="241" y="399.75" width="565" height="1.5" fill="#ebebeb"/><rect x="241" y="485.05" width="565" height="1.5" fill="#ebebeb"/><rect x="247.30" y="486.80" width="30.7" height="84.20" fill="#5ba1f0"/><rect x="247.30" y="458.90" width="30.7" height="27.90" fill="#22238a"/><rect x="247.30" y="445.90" width="30.7" height="13.00" fill="#7a43b8"/><rect x="247.30" y="440.00" width="30.7" height="5.90" fill="#eb9ed6"/><rect x="247.30" y="439.60" width="30.7" height="0.40" fill="#dc0f66"/><rect x="290.84" y="486.80" width="30.7" height="84.20" fill="#5ba1f0"/><rect x="290.84" y="458.00" width="30.7" height="28.80" fill="#22238a"/><rect x="290.84" y="445.00" width="30.7" height="13.00" fill="#7a43b8"/><rect x="290.84" y="440.00" width="30.7" height="5.00" fill="#eb9ed6"/><rect x="290.84" y="438.90" width="30.7" height="1.10" fill="#dc0f66"/><rect x="334.38" y="481.80" width="30.7" height="89.20" fill="#5ba1f0"/><rect x="334.38" y="452.00" width="30.7" height="29.80" fill="#22238a"/><rect x="334.38" y="439.00" width="30.7" height="13.00" fill="#7a43b8"/><rect x="334.38" y="434.00" width="30.7" height="5.00" fill="#eb9ed6"/><rect x="334.38" y="431.00" width="30.7" height="3.00" fill="#dc0f66"/><rect x="377.92" y="477.70" width="30.7" height="93.30" fill="#5ba1f0"/><rect x="377.92" y="446.90" width="30.7" height="30.80" fill="#22238a"/><rect x="377.92" y="433.20" width="30.7" height="13.70" fill="#7a43b8"/><rect x="377.92" y="427.00" width="30.7" height="6.20" fill="#eb9ed6"/><rect x="377.92" y="424.90" width="30.7" height="2.10" fill="#dc0f66"/><rect x="421.46" y="471.00" width="30.7" height="100.00" fill="#5ba1f0"/><rect x="421.46" y="438.90" width="30.7" height="32.10" fill="#22238a"/><rect x="421.46" y="425.10" width="30.7" height="13.80" fill="#7a43b8"/><rect x="421.46" y="419.10" width="30.7" height="6.00" fill="#eb9ed6"/><rect x="421.46" y="418.00" width="30.7" height="1.10" fill="#dc0f66"/><rect x="465.00" y="466.00" width="30.7" height="105.00" fill="#5ba1f0"/><rect x="465.00" y="430.90" width="30.7" height="35.10" fill="#22238a"/><rect x="465.00" y="417.10" width="30.7" height="13.80" fill="#7a43b8"/><rect x="465.00" y="410.20" width="30.7" height="6.90" fill="#eb9ed6"/><rect x="465.00" y="409.00" width="30.7" height="1.20" fill="#dc0f66"/><rect x="508.54" y="459.00" width="30.7" height="112.00" fill="#5ba1f0"/><rect x="508.54" y="421.00" width="30.7" height="38.00" fill="#22238a"/><rect x="508.54" y="407.10" width="30.7" height="13.90" fill="#7a43b8"/><rect x="508.54" y="400.00" width="30.7" height="7.10" fill="#eb9ed6"/><rect x="508.54" y="397.00" width="30.7" height="3.00" fill="#dc0f66"/><rect x="552.08" y="451.80" width="30.7" height="119.20" fill="#5ba1f0"/><rect x="552.08" y="410.90" width="30.7" height="40.90" fill="#22238a"/><rect x="552.08" y="397.20" width="30.7" height="13.70" fill="#7a43b8"/><rect x="552.08" y="389.00" width="30.7" height="8.20" fill="#eb9ed6"/><rect x="552.08" y="386.10" width="30.7" height="2.90" fill="#dc0f66"/><rect x="595.62" y="444.00" width="30.7" height="127.00" fill="#5ba1f0"/><rect x="595.62" y="400.10" width="30.7" height="43.90" fill="#22238a"/><rect x="595.62" y="383.00" width="30.7" height="17.10" fill="#7a43b8"/><rect x="595.62" y="374.10" width="30.7" height="8.90" fill="#eb9ed6"/><rect x="595.62" y="371.10" width="30.7" height="3.00" fill="#dc0f66"/><rect x="639.16" y="432.90" width="30.7" height="138.10" fill="#5ba1f0"/><rect x="639.16" y="387.00" width="30.7" height="45.90" fill="#22238a"/><rect x="639.16" y="366.00" width="30.7" height="21.00" fill="#7a43b8"/><rect x="639.16" y="356.20" width="30.7" height="9.80" fill="#eb9ed6"/><rect x="639.16" y="355.10" width="30.7" height="1.10" fill="#dc0f66"/><rect x="682.70" y="418.90" width="30.7" height="152.10" fill="#5ba1f0"/><rect x="682.70" y="369.00" width="30.7" height="49.90" fill="#22238a"/><rect x="682.70" y="347.10" width="30.7" height="21.90" fill="#7a43b8"/><rect x="682.70" y="337.00" width="30.7" height="10.10" fill="#eb9ed6"/><rect x="682.70" y="334.00" width="30.7" height="3.00" fill="#dc0f66"/><rect x="726.24" y="414.90" width="30.7" height="156.10" fill="#5ba1f0"/><rect x="726.24" y="370.00" width="30.7" height="44.90" fill="#22238a"/><rect x="726.24" y="350.10" width="30.7" height="19.90" fill="#7a43b8"/><rect x="726.24" y="340.00" width="30.7" height="10.10" fill="#eb9ed6"/><rect x="726.24" y="338.00" width="30.7" height="2.00" fill="#dc0f66"/><rect x="769.78" y="394.80" width="30.7" height="176.20" fill="#5ba1f0"/><rect x="769.78" y="344.00" width="30.7" height="50.80" fill="#22238a"/><rect x="769.78" y="322.10" width="30.7" height="21.90" fill="#7a43b8"/><rect x="769.78" y="311.00" width="30.7" height="11.10" fill="#eb9ed6"/><rect x="769.78" y="307.90" width="30.7" height="3.10" fill="#dc0f66"/><rect x="241" y="570" width="565" height="2" fill="#333"/><rect x="827.3" y="308.2" width="18.3" height="18.2" fill="#dc0f66"/><rect x="827.3" y="338.1" width="18.3" height="18.2" fill="#eb9ed6"/><rect x="827.3" y="368.0" width="18.3" height="18.2" fill="#7a43b8"/><rect x="827.3" y="397.9" width="18.3" height="18.2" fill="#22238a"/><rect x="827.3" y="427.8" width="18.3" height="18.2" fill="#5ba1f0"/>
</svg>
</body></html>
